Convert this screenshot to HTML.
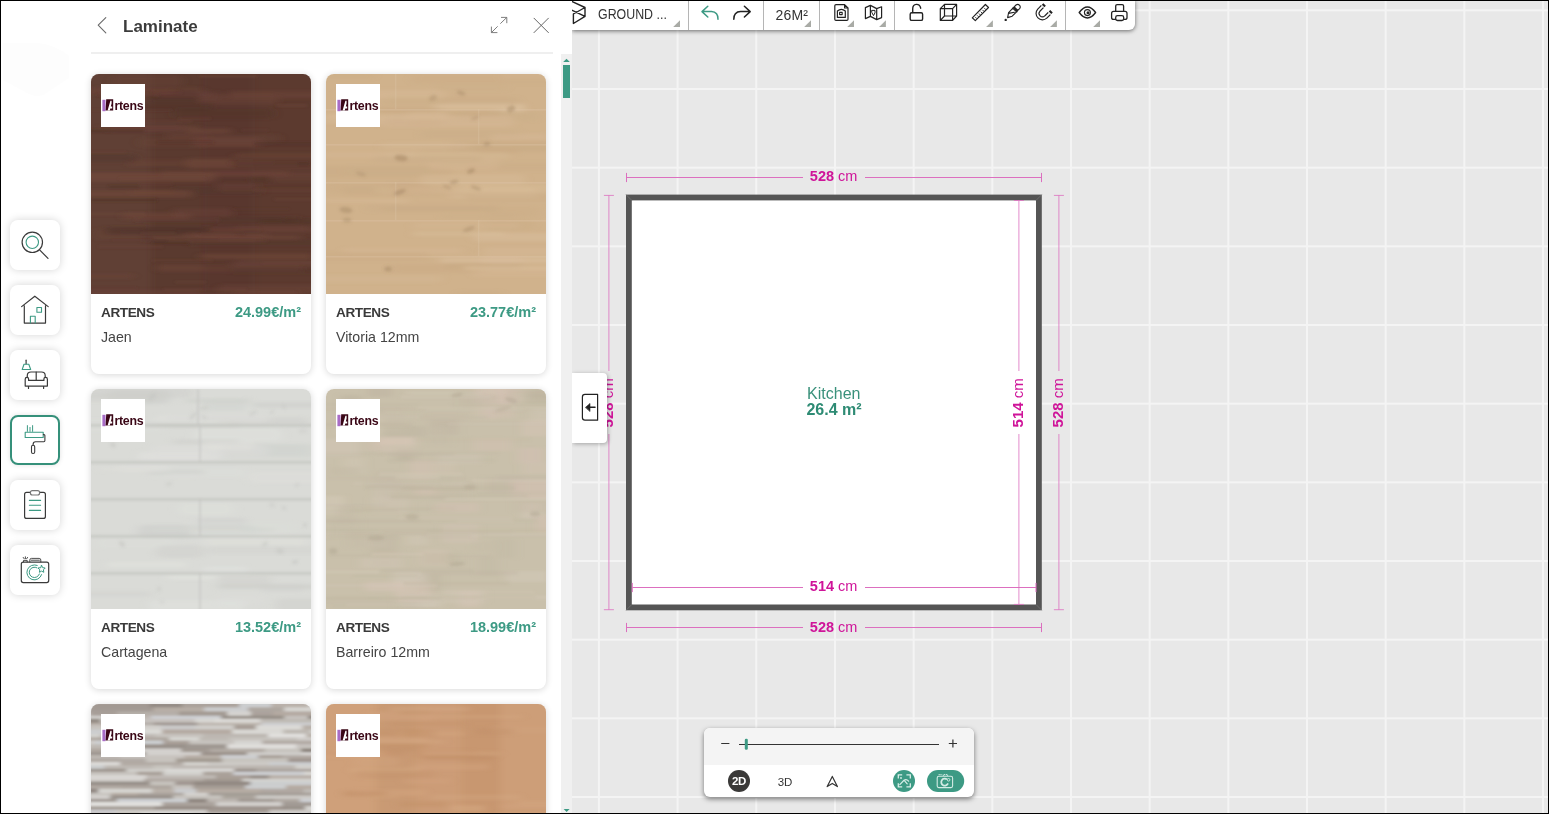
<!DOCTYPE html>
<html>
<head>
<meta charset="utf-8">
<title>Planner</title>
<style>
*{box-sizing:border-box;margin:0;padding:0}
html,body{width:1549px;height:814px;overflow:hidden;background:#fff;font-family:"Liberation Sans",sans-serif;}
#app{position:absolute;left:0;top:0;width:1549px;height:814px;overflow:hidden;background:#fff;will-change:transform}
#frame{position:absolute;left:0;top:0;width:1549px;height:814px;border:1px solid #000;z-index:100;pointer-events:none}
.abs{position:absolute}
/* ---------- canvas ---------- */
#canvas{position:absolute;left:572px;top:0;width:977px;height:814px;background:#e8e8e8;overflow:hidden}
#canvas svg{position:absolute;left:0;top:0}
/* ---------- left panel ---------- */
#panel{position:absolute;left:0;top:0;width:572px;height:814px;background:#fff;overflow:hidden}
#track{position:absolute;left:561px;top:54px;width:11px;height:760px;background:#f0f0f0}
#thumb{position:absolute;left:563px;top:65px;width:7px;height:33px;background:#3d9a84}
.sb{position:absolute;left:10px;width:50px;height:50px;border-radius:8px;background:#fff;box-shadow:0 0 8px rgba(0,0,0,.17)}
.sb.on{border:2px solid #35907a;box-shadow:0 0 5px rgba(0,0,0,.12)}
.sb svg{position:absolute;left:0;top:0}
.sb.on svg{left:-2px;top:-2px}
#title{position:absolute;left:123px;top:16.5px;font-weight:bold;font-size:17px;line-height:20px;color:#3c3c3c;white-space:nowrap}
#hline{position:absolute;left:91px;top:52px;width:462px;height:2px;background:#efefef}
.card{position:absolute;width:220px;height:300px;border-radius:8px;background:#fff;box-shadow:0 1px 7px rgba(0,0,0,.16);overflow:hidden}
.card .img{position:absolute;left:0;top:0;width:220px;height:220px;overflow:hidden}
.card .logo{position:absolute;left:10px;top:10px;width:44px;height:43px;background:#fff}
.card .brand{position:absolute;left:10px;top:231px;font-weight:bold;font-size:13.6px;line-height:16px;color:#3a3a3a;white-space:nowrap;letter-spacing:-.42px}
.card .price{position:absolute;right:10px;top:230px;font-weight:bold;font-size:14.5px;line-height:16px;color:#3d9a84;white-space:nowrap;letter-spacing:0}
.card .name{position:absolute;left:10px;top:254.8px;font-size:14.2px;line-height:16px;color:#444;white-space:nowrap}
/* ---------- toolbar ---------- */
#toolbar{position:absolute;left:572px;top:0;width:563px;height:30px;background:#fff;border-bottom-right-radius:6px;box-shadow:0 1px 4px rgba(0,0,0,.55)}
#toolbar svg{position:absolute;left:0;top:0}
#toolbar .t{position:absolute;font-size:14px;line-height:16px;color:#333;white-space:nowrap}
/* ---------- collapse btn ---------- */
#collapse{position:absolute;left:572px;top:373px;width:35px;height:70px;background:#fff;border-radius:0 4px 4px 0;box-shadow:1px 1px 4px rgba(0,0,0,.3)}
/* ---------- bottom control ---------- */
#ctrl{position:absolute;left:704px;top:728px;width:270px;height:69px;background:#fff;border-radius:6px;box-shadow:0 2px 5px rgba(0,0,0,.5);overflow:hidden}
#ctrl .top{position:absolute;left:0;top:0;width:270px;height:37px;background:#f4f4f4}
</style>
</head>
<body>
<div id="app">

<!-- CANVAS -->
<div id="canvas">
<svg width="977" height="814" viewBox="572 0 977 814" font-family="Liberation Sans, sans-serif">
<g fill="#f4f4f4"><rect x="519.28" y="0" width="2" height="814"/><rect x="597.95" y="0" width="2" height="814"/><rect x="676.62" y="0" width="2" height="814"/><rect x="755.29" y="0" width="2" height="814"/><rect x="833.96" y="0" width="2" height="814"/><rect x="912.63" y="0" width="2" height="814"/><rect x="991.30" y="0" width="2" height="814"/><rect x="1069.97" y="0" width="2" height="814"/><rect x="1148.64" y="0" width="2" height="814"/><rect x="1227.31" y="0" width="2" height="814"/><rect x="1305.98" y="0" width="2" height="814"/><rect x="1384.65" y="0" width="2" height="814"/><rect x="1463.32" y="0" width="2" height="814"/><rect x="1541.99" y="0" width="2" height="814"/><rect x="572" y="9.30" width="977" height="2"/><rect x="572" y="87.97" width="977" height="2"/><rect x="572" y="166.64" width="977" height="2"/><rect x="572" y="245.31" width="977" height="2"/><rect x="572" y="323.98" width="977" height="2"/><rect x="572" y="402.65" width="977" height="2"/><rect x="572" y="481.32" width="977" height="2"/><rect x="572" y="559.99" width="977" height="2"/><rect x="572" y="638.66" width="977" height="2"/><rect x="572" y="717.33" width="977" height="2"/><rect x="572" y="796.00" width="977" height="2"/></g>
<rect x="626" y="194.6" width="415.79999999999995" height="415.69999999999993" fill="#555"/>
<rect x="631.8" y="200.4" width="404.19999999999993" height="404.0999999999999" fill="#fff"/>
<path d="M626 194.6l5.8 5.8M1041.8 194.6l-5.8 5.8M626 610.3l5.8 -5.8M1041.8 610.3l-5.8 -5.8" stroke="#777" stroke-width=".7"/>
<path d="M626.5 177.5H803M865 177.5H1041.5M626.5 172.9V182.1M1041.5 172.9V182.1" stroke="#dc6fbf" stroke-width="1" fill="none"/><text x="833.6" y="181.2" text-anchor="middle" font-size="14.5" fill="#cf1499"><tspan font-weight="bold">528</tspan> cm</text>
<path d="M626.5 627.5H803M865 627.5H1041.5M626.5 622.9V632.1M1041.5 622.9V632.1" stroke="#dc6fbf" stroke-width="1" fill="none"/><text x="833.6" y="632.2" text-anchor="middle" font-size="14.5" fill="#cf1499"><tspan font-weight="bold">528</tspan> cm</text>
<path d="M632.3 587.5H803M865 587.5H1036M632.3 582.9V592.1M1036 582.9V592.1" stroke="#dc6fbf" stroke-width="1" fill="none"/><text x="833.6" y="591.2" text-anchor="middle" font-size="14.5" fill="#cf1499"><tspan font-weight="bold">514</tspan> cm</text>
<path d="M608.9 195.4V371M608.9 434V609.7M603.9 195.4H613.9M603.9 609.7H613.9" stroke="#dc6fbf" stroke-width="1" fill="none" opacity=".8"/><text transform="translate(613 402.8) rotate(-90)" text-anchor="middle" font-size="15" fill="#cf1499"><tspan font-weight="bold">528</tspan> cm</text>
<path d="M1058.9 195.4V371M1058.9 434V609.7M1053.9 195.4H1063.9M1053.9 609.7H1063.9" stroke="#dc6fbf" stroke-width="1" fill="none" opacity=".8"/><text transform="translate(1063.2 402.8) rotate(-90)" text-anchor="middle" font-size="15" fill="#cf1499"><tspan font-weight="bold">528</tspan> cm</text>
<path d="M1018.9 200.5V371M1018.9 434V604.4M1013.9 200.5H1023.9M1013.9 604.4H1023.9" stroke="#dc6fbf" stroke-width="1" fill="none" opacity=".8"/><text transform="translate(1023 402.8) rotate(-90)" text-anchor="middle" font-size="15" fill="#cf1499"><tspan font-weight="bold">514</tspan> cm</text>
<text x="833.8" y="398.8" text-anchor="middle" font-size="16" fill="#3a917b">Kitchen</text>
<text x="834" y="414.8" text-anchor="middle" font-size="16" font-weight="bold" fill="#2e8b74">26.4 m²</text>
</svg>
</div>

<!-- TOOLBAR -->
<div id="toolbar">
<svg width="563" height="30" viewBox="572 0 563 30" fill="none" stroke-linecap="round" stroke-linejoin="round">
<path d="M688.5 1V30" stroke="#b5b5b5" stroke-width="1"/>
<path d="M763.5 1V30" stroke="#b5b5b5" stroke-width="1"/>
<path d="M819.5 1V30" stroke="#b5b5b5" stroke-width="1"/>
<path d="M894.5 1V30" stroke="#b5b5b5" stroke-width="1"/>
<path d="M1065.5 1V30" stroke="#b5b5b5" stroke-width="1"/>
<path d="M673.2 27L680.0 20.2V27Z" fill="#a9aba6"/>
<path d="M804.2 27L811.0 20.2V27Z" fill="#a9aba6"/>
<path d="M847.2 27L854.0 20.2V27Z" fill="#a9aba6"/>
<path d="M879.1 27L885.9 20.2V27Z" fill="#a9aba6"/>
<path d="M986.1 27L992.9 20.2V27Z" fill="#a9aba6"/>
<path d="M1050.1 27L1056.8999999999999 20.2V27Z" fill="#a9aba6"/>
<path d="M1093.2 27L1100.0 20.2V27Z" fill="#a9aba6"/>
<path d="M571 1L585 7.5V16.4L573.4 23.5V14M585 7.5L573.4 14M571 9.8L585 16.4" stroke="#222" stroke-width="1.4"/>
<path d="M707.8 6.3L702 11.6L707.8 17M702.4 11.6H711.5C716 11.6 718.2 15 718 19.2" stroke="#3d9a84" stroke-width="1.5"/>
<path d="M744.4 6.3L750.2 11.6L744.4 17M749.8 11.6H740.6C736 11.6 733.6 15 733.8 19.2" stroke="#222" stroke-width="1.5"/>
<path d="M836 4.6H844.6L848 8V19.2Q848 20.4 846.8 20.4H836Q834.8 20.4 834.8 19.2V5.8Q834.8 4.6 836 4.6ZM844.6 4.6V8H848" stroke="#222" stroke-width="1.2"/>
<path d="M837.4 17.4V11Q841.3 7.6 845.3 11V17.4Z" stroke="#222" stroke-width="1.2"/><rect x="839.6" y="12.4" width="2.6" height="2.2" stroke="#222" stroke-width="1.1"/>
<path d="M865.4 7.6L870.4 5.4L876.7 8.6L881.6 6.8V17.6L876.7 19.6L870.4 16.4L865.4 18.6ZM870.4 5.4V16.4M876.7 8.6V19.6" stroke="#222" stroke-width="1.2"/>
<path d="M872 10.4H875V12.8L873.5 15.6L872 12.8Z" stroke="#222" stroke-width="1"/>
<rect x="910.2" y="12.8" width="12.4" height="7.6" rx="1.5" stroke="#222" stroke-width="1.4"/>
<path d="M912.7 12.6V9C912.7 3 919.6 3 920.7 8.2" stroke="#222" stroke-width="1.4"/>
<path d="M940.3 8.6H952.6V20.4H940.3ZM944.5 4.4H956.6V16H944.5ZM940.3 8.6L944.5 4.4M952.6 8.6L956.6 4.4M952.6 20.4L956.6 16M940.3 20.4L944.5 16" stroke="#222" stroke-width="1.2"/>
<path d="M972.3 17.8L985.4 4.5L988.5 7.5L975.3 20.6Z" stroke="#222" stroke-width="1.2"/>
<path d="M975.6 17.4l.9.9M977.4 15.6l.9.9M979.2 13.8l.9.9M981 12l.9.9M982.8 10.2l.9.9M984.6 8.4l.9.9" stroke="#222" stroke-width=".9"/>
<circle cx="1005.7" cy="19.9" r="1.2" fill="#222"/>
<path d="M1007.6 17.6L1008.6 12.6L1013.6 7.4L1017.4 11L1012.2 16.2Z M1008.6 13.4L1014.4 12.2 M1012.6 8.2L1016.8 12 M1014.2 6.8L1016 5Q1017.8 3.6 1019.4 5.2Q1021 6.8 1019.6 8.6L1017.8 10.4Z" stroke="#222" stroke-width="1.1"/>
<path d="M1042.4 6.6L1038.84 10.14A4.9 4.9 0 0 0 1045.76 17.06L1049.3 13.5" stroke="#222" stroke-width="4.2" stroke-linecap="butt"/>
<path d="M1042.8 6.2L1038.84 10.14A4.9 4.9 0 0 0 1045.76 17.06L1049.7 13.1" stroke="#fff" stroke-width="1.9" stroke-linecap="butt"/>
<path d="M1042.4 6.6l.05-.05M1049.3 13.5l.05-.05" stroke="#222" stroke-width="4.2" stroke-linecap="butt"/>
<path d="M1043.1 5.9L1044.6 4.4M1050 12.8L1051.5 11.3" stroke="#222" stroke-width="3.6" stroke-linecap="butt"/>
<path d="M1079.2 12.5Q1087.4 1.6 1095.6 12.5Q1087.4 23.4 1079.2 12.5Z" stroke="#222" stroke-width="1.4"/>
<circle cx="1087.4" cy="12.6" r="3" stroke="#222" stroke-width="1.1"/><circle cx="1088" cy="12.8" r="1.5" fill="#222"/>
<rect x="1111.6" y="11.4" width="15.4" height="8" rx="2" stroke="#222" stroke-width="1.3"/>
<path d="M1115.7 11.2V6Q1115.7 4.6 1117.1 4.6H1122.2Q1123.6 4.6 1123.6 6V11.2" stroke="#222" stroke-width="1.3"/>
<rect x="1115.7" y="15.6" width="8" height="4.9" rx="1.8" fill="#fff" stroke="#222" stroke-width="1.3"/>
</svg>
<div class="t" style="left:25.5px;top:6px;transform:scaleX(.885);transform-origin:0 0">GROUND ...</div>
<div class="t" style="left:203.5px;top:7px;letter-spacing:.2px">26M²</div>
</div>

<!-- COLLAPSE -->
<div id="collapse">
<svg width="35" height="70" viewBox="572 373 35 70" fill="none" stroke="#222" stroke-linecap="round" stroke-linejoin="round"><path d="M597.6 394.4H585Q582.4 394.4 582.4 397V417.6Q582.4 420.2 585 420.2H597.6Z" stroke-width="1.2"/><path d="M588 407.3H595" stroke-width="1.5"/><path d="M585.6 407.3L590 403.4V411.2Z" fill="#222" stroke-width=".6"/></svg>
</div>

<!-- BOTTOM CONTROL -->
<div id="ctrl">
<div class="top"></div>
<svg style="position:absolute;left:0;top:0" width="270" height="69" viewBox="704 728 270 69" fill="none" font-family="Liberation Sans, sans-serif">
<path d="M721.2 743.5H729.4M948.8 743.5H957M952.9 739.4V747.6" stroke="#333" stroke-width="1.2"/>
<path d="M739 744.5H939" stroke="#333" stroke-width="1"/>
<rect x="744.8" y="738.8" width="3" height="11" rx="1.3" fill="#3d9a84"/>
<circle cx="739" cy="781" r="11" fill="#3a3938"/>
<text x="739" y="785.4" text-anchor="middle" font-size="11.5" font-weight="bold" fill="#fff" letter-spacing="-.4">2D</text>
<text x="785" y="786" text-anchor="middle" font-size="11.5" fill="#333">3D</text>
<path d="M832.3 776.4L837.4 786.6L832.3 783.4L827.2 786.6Z" stroke="#333" stroke-width="1.2" stroke-linejoin="round"/>
<circle cx="904" cy="781" r="11" fill="#3d9a84"/>
<path d="M898.3 778.6V774.9H902.2M906.4 774.9H910.3V778.6M910.3 783.2V786.9H906.4M902.2 786.9H898.3V783.2" stroke="#d9eee8" stroke-width="1.3"/>
<path d="M899.8 784.6L904 780.3Q906.4 778.6 908.6 781.2M904.8 781.2L907.2 783.8" stroke="#d9eee8" stroke-width="1.2" stroke-linecap="round"/><circle cx="901" cy="778" r=".9" fill="#d9eee8"/>
<rect x="927" y="770" width="37.2" height="22" rx="11" fill="#3d9a84"/>
<rect x="937.2" y="776.3" width="15.4" height="11.3" rx="1.6" stroke="#d4ebe5" stroke-width="1.1"/>
<path d="M938.6 774.6H942.4M943.4 775.8V774.6H947.6V775.8" stroke="#d4ebe5" stroke-width="1" stroke-dasharray="1.2 .6"/>
<path d="M947 779.4A3.5 3.5 0 1 0 948 783.4" stroke="#d4ebe5" stroke-width="1.8"/><circle cx="948.6" cy="779.8" r="1.3" stroke="#d4ebe5" stroke-width=".9" fill="#3d9a84"/>
</svg>
</div>

<!-- LEFT PANEL -->
<div id="panel">
<svg width="0" height="0" style="position:absolute"><defs><filter id="b1" x="-5%" y="-5%" width="110%" height="110%"><feGaussianBlur stdDeviation="1.6 0.9"/></filter><filter id="b2" x="-5%" y="-5%" width="110%" height="110%"><feGaussianBlur stdDeviation="2.2 0.8"/></filter><filter id="b3" x="-5%" y="-5%" width="110%" height="110%"><feGaussianBlur stdDeviation="4 1.8"/></filter><filter id="b4" x="-5%" y="-5%" width="110%" height="110%"><feGaussianBlur stdDeviation="1.5"/></filter><filter id="b5" x="-5%" y="-5%" width="110%" height="110%"><feGaussianBlur stdDeviation="0.9"/></filter></defs></svg>
<div class="sb" style="top:220px"><svg width="50" height="50" viewBox="0 0 50 50" fill="none" stroke-linecap="round" stroke-linejoin="round"><circle cx="22.3" cy="22.3" r="10.2" stroke="#3a3a3a" stroke-width="1.2"/><circle cx="22.3" cy="22.3" r="6.2" stroke="#3d9a84" stroke-width="1.1"/><path d="M29.6 29.8L38 38.4" stroke="#3a3a3a" stroke-width="1.2"/></svg></div>
<div class="sb" style="top:285px"><svg width="50" height="50" viewBox="0 0 50 50" fill="none" stroke-linecap="round" stroke-linejoin="round"><path d="M11.6 21.6L24.8 11.2L38.2 21.6M14.3 20.8V38.1H35.5V20.8" stroke="#3a3a3a" stroke-width="1.2"/><rect x="26.9" y="22.5" width="4.6" height="4.7" stroke="#3d9a84" stroke-width="1.1"/><path d="M20.4 38V31.3H25.2V38" stroke="#3d9a84" stroke-width="1.1"/></svg></div>
<div class="sb" style="top:350px"><svg width="50" height="50" viewBox="0 0 50 50" fill="none" stroke-linecap="round" stroke-linejoin="round"><path d="M16.1 10.2V14" stroke="#3a3a3a" stroke-width="1.2"/><path d="M14 14.3H18.8L20.7 19.5H12.2Z" stroke="#3d9a84" stroke-width="1.1"/><path d="M17.3 27.4V25.6Q17.3 22 21 22H31.4Q35.2 22 35.2 25.6V27.4" stroke="#3a3a3a" stroke-width="1.2"/><path d="M18.6 30.4V29Q18.6 27.4 17 27.4Q15.2 27.4 15.2 29.2V36.1H37.4V29.2Q37.4 27.4 35.6 27.4Q33.9 27.4 33.9 29V30.4ZM26.2 22V30.4M18.5 36.1V38.4M33.6 36.1V38.4" stroke="#3a3a3a" stroke-width="1.2"/></svg></div>
<div class="sb on" style="top:415px"><svg width="50" height="50" viewBox="0 0 50 50" fill="none" stroke-linecap="round" stroke-linejoin="round"><rect x="15.2" y="17.3" width="18" height="5.2" stroke="#3d9a84" stroke-width="1.1"/><path d="M17.4 10.6V16.4M20 12.4V16.4M22.6 10.6V16.4" stroke="#3d9a84" stroke-width="1"/><path d="M33.4 19.6H34Q34.9 19.6 34.9 20.6V25.6Q34.9 26.8 33.8 26.8H25.6Q23.1 26.8 23.1 29.4V30.2" stroke="#3a3a3a" stroke-width="1.1"/><rect x="21.5" y="30.3" width="3.2" height="8.2" rx="1.5" stroke="#3a3a3a" stroke-width="1.1"/></svg></div>
<div class="sb" style="top:480px"><svg width="50" height="50" viewBox="0 0 50 50" fill="none" stroke-linecap="round" stroke-linejoin="round"><path d="M20.4 12.4H16.6Q14.6 12.4 14.6 14.4V36.4Q14.6 38.4 16.6 38.4H33.4Q35.4 38.4 35.4 36.4V14.4Q35.4 12.4 33.4 12.4H29.6" stroke="#3a3a3a" stroke-width="1.2"/><rect x="20.4" y="10.6" width="9.2" height="4.4" rx="2" stroke="#777" stroke-width="1.2"/><path d="M19.4 20.4H30.6M19.4 25.3H30.6M19.4 30.4H30.6" stroke="#3d9a84" stroke-width="1.1"/></svg></div>
<div class="sb" style="top:545px"><svg width="50" height="50" viewBox="0 0 50 50" fill="none" stroke-linecap="round" stroke-linejoin="round"><rect x="11.3" y="17.2" width="27.4" height="20.4" rx="2" stroke="#3a3a3a" stroke-width="1.2"/><path d="M19.8 17V15Q19.8 13.4 21.4 13.4H29.2Q30.8 13.4 30.8 15V17M21.2 15.2H29.4M13.5 17V15.4H17.2V17M13.2 12.4L14.2 13.8M15.4 11.8V13.6M17.6 12.4L16.6 13.8" stroke="#3a3a3a" stroke-width=".9"/><path d="M27.2 20.4A7.5 7.5 0 1 0 31.6 29.6" stroke="#3d9a84" stroke-width="1"/><path d="M27 22.8A5.2 5.2 0 1 0 29.4 29" stroke="#3d9a84" stroke-width="1"/><path d="M31.6 20.4L32.7 22.7L35.2 23L33.4 24.8L33.8 27.3L31.6 26.1L29.4 27.3L29.8 24.8L28 23L30.5 22.7Z" stroke="#3d9a84" stroke-width="1" fill="#fff"/></svg></div>
<svg class="abs" style="left:0;top:40px" width="75" height="60" viewBox="0 40 75 60"><path d="M3 43H38Q56 45 69 56V78L43 95Q35 98 27 93L3 80Z" fill="#fdfdfd"/></svg>
<svg class="abs" style="left:90px;top:10px" width="480" height="32" viewBox="90 10 480 32" fill="none" stroke="#6a6a6a" stroke-width="1.1" stroke-linecap="round" stroke-linejoin="round"><path d="M105.8 17.6L98.2 25.2L105.8 32.8"/><path d="M491.6 32.4L497.4 26.6M500.6 23.4L506.6 17.6M501.4 17.4H506.8V22.8M491.4 27V32.6H497" stroke="#777" stroke-width=".95"/><path d="M534 18.2L548.4 32.6M548.4 18.2L534 32.6" stroke="#666" stroke-width="1"/></svg>
<div id="title">Laminate</div>
<div id="hline"></div>
<div class="card" style="left:91px;top:74px"><div class="img"><svg width="220" height="220" viewBox="0 0 220 220"><rect width="220" height="220" fill="#5c3b30"/><g filter="url(#b3)"><rect x="-10" y="-10" width="70" height="240" fill="#66443a" opacity="0.45"/><rect x="60" y="-10" width="50" height="240" fill="#563830" opacity="0.3"/><rect x="110" y="-10" width="50" height="240" fill="#5e3d32" opacity="0.2"/><rect x="160" y="-10" width="70" height="240" fill="#5b3a30" opacity="0.3"/><rect x="112" y="-10" width="50" height="240" fill="#53352c" opacity="0.35"/></g><g filter="url(#b3)"><rect x="160" y="101.4" width="90" height="7.9" rx="4.0" fill="#52352b" opacity="0.56"/><rect x="81" y="134.3" width="61" height="9.6" rx="4.8" fill="#70463a" opacity="0.33"/><rect x="144" y="151.9" width="73" height="4.6" rx="2.3" fill="#6c4438" opacity="0.48"/><rect x="125" y="142.3" width="84" height="7.2" rx="3.6" fill="#52352b" opacity="0.30"/><rect x="9" y="51.7" width="98" height="4.4" rx="2.2" fill="#6c4438" opacity="0.53"/><rect x="17" y="49.9" width="76" height="8.1" rx="4.1" fill="#68423a" opacity="0.45"/><rect x="21" y="219.5" width="113" height="7.2" rx="3.6" fill="#6c4438" opacity="0.51"/><rect x="37" y="13.6" width="75" height="5.6" rx="2.8" fill="#6c4438" opacity="0.42"/><rect x="145" y="186.1" width="133" height="6.7" rx="3.4" fill="#6c4438" opacity="0.36"/><rect x="29" y="155.4" width="142" height="4.4" rx="2.2" fill="#4e3229" opacity="0.32"/><rect x="21" y="17.3" width="109" height="9.4" rx="4.7" fill="#68423a" opacity="0.30"/><rect x="2" y="155.0" width="85" height="10.5" rx="5.2" fill="#6c4438" opacity="0.32"/><rect x="70" y="97.3" width="128" height="5.2" rx="2.6" fill="#70463a" opacity="0.60"/><rect x="37" y="85.7" width="125" height="6.9" rx="3.5" fill="#70463a" opacity="0.30"/><rect x="74" y="219.5" width="135" height="10.8" rx="5.4" fill="#6c4438" opacity="0.36"/><rect x="105" y="20.3" width="83" height="10.0" rx="5.0" fill="#70463a" opacity="0.36"/><rect x="47" y="63.8" width="68" height="9.4" rx="4.7" fill="#6c4438" opacity="0.32"/><rect x="-16" y="79.8" width="63" height="8.5" rx="4.2" fill="#52352b" opacity="0.44"/><rect x="66" y="190.4" width="146" height="7.4" rx="3.7" fill="#70463a" opacity="0.49"/><rect x="103" y="159.0" width="74" height="5.6" rx="2.8" fill="#70463a" opacity="0.52"/><rect x="139" y="193.8" width="143" height="5.4" rx="2.7" fill="#52352b" opacity="0.32"/><rect x="95" y="54.6" width="45" height="4.8" rx="2.4" fill="#72493b" opacity="0.51"/><rect x="103" y="63.1" width="68" height="9.8" rx="4.9" fill="#70463a" opacity="0.58"/><rect x="47" y="143.1" width="147" height="4.9" rx="2.4" fill="#52352b" opacity="0.48"/><rect x="21" y="1.7" width="71" height="10.4" rx="5.2" fill="#68423a" opacity="0.42"/><rect x="38" y="115.9" width="67" height="4.3" rx="2.2" fill="#70463a" opacity="0.33"/><rect x="53" y="160.7" width="55" height="7.2" rx="3.6" fill="#52352b" opacity="0.48"/><rect x="-13" y="200.1" width="55" height="4.2" rx="2.1" fill="#72493b" opacity="0.39"/><rect x="3" y="12.9" width="44" height="8.2" rx="4.1" fill="#68423a" opacity="0.40"/><rect x="59" y="161.6" width="150" height="4.5" rx="2.3" fill="#72493b" opacity="0.52"/><rect x="55" y="16.9" width="54" height="10.7" rx="5.4" fill="#4e3229" opacity="0.57"/><rect x="112" y="189.7" width="136" height="6.9" rx="3.5" fill="#52352b" opacity="0.30"/><rect x="-31" y="14.0" width="113" height="6.7" rx="3.3" fill="#6c4438" opacity="0.49"/><rect x="94" y="84.2" width="149" height="10.2" rx="5.1" fill="#72493b" opacity="0.51"/><rect x="82" y="113.2" width="90" height="7.2" rx="3.6" fill="#52352b" opacity="0.31"/><rect x="14" y="153.0" width="106" height="7.4" rx="3.7" fill="#4e3229" opacity="0.53"/><rect x="143" y="79.7" width="113" height="7.4" rx="3.7" fill="#70463a" opacity="0.50"/><rect x="169" y="144.5" width="62" height="5.2" rx="2.6" fill="#4e3229" opacity="0.45"/><rect x="32" y="138.8" width="67" height="6.8" rx="3.4" fill="#70463a" opacity="0.56"/><rect x="40" y="28.2" width="82" height="8.1" rx="4.0" fill="#4e3229" opacity="0.41"/><rect x="-29" y="215.6" width="139" height="4.3" rx="2.1" fill="#70463a" opacity="0.33"/><rect x="140" y="82.9" width="92" height="10.5" rx="5.2" fill="#52352b" opacity="0.45"/><rect x="179" y="98.4" width="75" height="9.9" rx="4.9" fill="#6c4438" opacity="0.55"/><rect x="118" y="60.4" width="71" height="8.3" rx="4.1" fill="#68423a" opacity="0.39"/><rect x="-12" y="99.0" width="127" height="4.1" rx="2.1" fill="#6c4438" opacity="0.53"/><rect x="143" y="216.5" width="69" height="9.5" rx="4.7" fill="#6c4438" opacity="0.43"/><rect x="127" y="210.8" width="109" height="8.6" rx="4.3" fill="#72493b" opacity="0.36"/><rect x="99" y="165.6" width="131" height="5.8" rx="2.9" fill="#52352b" opacity="0.51"/><rect x="54" y="152.8" width="60" height="5.9" rx="3.0" fill="#52352b" opacity="0.45"/><rect x="116" y="153.4" width="150" height="5.1" rx="2.6" fill="#70463a" opacity="0.33"/><rect x="-18" y="98.7" width="143" height="9.1" rx="4.5" fill="#72493b" opacity="0.57"/><rect x="126" y="109.6" width="41" height="7.9" rx="3.9" fill="#68423a" opacity="0.44"/><rect x="109" y="179.7" width="112" height="5.4" rx="2.7" fill="#72493b" opacity="0.58"/><rect x="66" y="17.5" width="54" height="5.7" rx="2.8" fill="#68423a" opacity="0.46"/><rect x="139" y="188.0" width="127" height="6.2" rx="3.1" fill="#68423a" opacity="0.45"/><rect x="76" y="59.1" width="44" height="6.4" rx="3.2" fill="#6c4438" opacity="0.37"/><rect x="-34" y="116.4" width="135" height="7.0" rx="3.5" fill="#72493b" opacity="0.54"/><rect x="91" y="158.6" width="55" height="5.0" rx="2.5" fill="#72493b" opacity="0.51"/><rect x="138" y="17.1" width="144" height="7.4" rx="3.7" fill="#70463a" opacity="0.43"/><rect x="82" y="34.5" width="101" height="9.8" rx="4.9" fill="#52352b" opacity="0.55"/></g><g filter="url(#b1)"><rect x="61" y="185.6" width="61" height="2.1" rx="1.1" fill="#744a3d" opacity="0.28"/><rect x="48" y="108.5" width="34" height="2.6" rx="1.3" fill="#683f35" opacity="0.33"/><rect x="-12" y="213.2" width="58" height="2.7" rx="1.4" fill="#683f35" opacity="0.34"/><rect x="-8" y="35.0" width="89" height="1.7" rx="0.9" fill="#683f35" opacity="0.30"/><rect x="28" y="103.0" width="87" height="3.3" rx="1.7" fill="#744a3d" opacity="0.28"/><rect x="162" y="114.5" width="84" height="3.4" rx="1.7" fill="#70463a" opacity="0.25"/><rect x="7" y="171.0" width="65" height="3.4" rx="1.7" fill="#70463a" opacity="0.21"/><rect x="50" y="158.6" width="35" height="1.5" rx="0.8" fill="#744a3d" opacity="0.35"/><rect x="17" y="111.3" width="32" height="3.0" rx="1.5" fill="#4c3028" opacity="0.38"/><rect x="-16" y="138.5" width="71" height="3.3" rx="1.6" fill="#744a3d" opacity="0.33"/><rect x="20" y="46.0" width="81" height="2.6" rx="1.3" fill="#744a3d" opacity="0.26"/><rect x="163" y="68.1" width="73" height="3.1" rx="1.6" fill="#4c3028" opacity="0.42"/><rect x="30" y="19.5" width="38" height="3.1" rx="1.5" fill="#744a3d" opacity="0.23"/><rect x="84" y="206.9" width="31" height="2.3" rx="1.1" fill="#744a3d" opacity="0.25"/><rect x="0" y="124.5" width="66" height="3.1" rx="1.5" fill="#4c3028" opacity="0.43"/><rect x="76" y="166.3" width="88" height="1.7" rx="0.9" fill="#744a3d" opacity="0.40"/><rect x="142" y="134.2" width="56" height="1.5" rx="0.8" fill="#683f35" opacity="0.24"/><rect x="168" y="217.8" width="37" height="1.9" rx="1.0" fill="#70463a" opacity="0.34"/><rect x="6" y="19.5" width="34" height="2.9" rx="1.4" fill="#683f35" opacity="0.32"/><rect x="108" y="0.9" width="58" height="2.4" rx="1.2" fill="#70463a" opacity="0.41"/><rect x="146" y="88.0" width="37" height="2.4" rx="1.2" fill="#744a3d" opacity="0.35"/><rect x="60" y="16.8" width="31" height="3.1" rx="1.5" fill="#683f35" opacity="0.34"/><rect x="61" y="167.3" width="37" height="2.7" rx="1.3" fill="#4c3028" opacity="0.43"/><rect x="145" y="88.1" width="73" height="3.1" rx="1.5" fill="#4c3028" opacity="0.42"/><rect x="137" y="88.1" width="70" height="3.0" rx="1.5" fill="#744a3d" opacity="0.22"/><rect x="-12" y="77.0" width="47" height="2.4" rx="1.2" fill="#70463a" opacity="0.26"/><rect x="43" y="144.5" width="86" height="2.8" rx="1.4" fill="#744a3d" opacity="0.33"/><rect x="120" y="153.7" width="50" height="3.5" rx="1.7" fill="#683f35" opacity="0.45"/><rect x="151" y="55.0" width="26" height="2.7" rx="1.4" fill="#683f35" opacity="0.33"/><rect x="-20" y="55.4" width="74" height="2.8" rx="1.4" fill="#4c3028" opacity="0.43"/><rect x="183" y="124.1" width="61" height="2.5" rx="1.3" fill="#70463a" opacity="0.36"/><rect x="99" y="166.6" width="78" height="1.7" rx="0.8" fill="#70463a" opacity="0.30"/><rect x="171" y="188.0" width="86" height="2.3" rx="1.1" fill="#70463a" opacity="0.31"/><rect x="66" y="67.4" width="57" height="2.1" rx="1.0" fill="#4c3028" opacity="0.32"/><rect x="128" y="164.0" width="43" height="3.4" rx="1.7" fill="#70463a" opacity="0.20"/><rect x="21" y="165.5" width="41" height="1.6" rx="0.8" fill="#683f35" opacity="0.21"/><rect x="109" y="158.5" width="45" height="2.3" rx="1.1" fill="#4c3028" opacity="0.22"/><rect x="72" y="214.0" width="84" height="2.4" rx="1.2" fill="#744a3d" opacity="0.21"/><rect x="185" y="30.0" width="31" height="3.1" rx="1.6" fill="#744a3d" opacity="0.35"/><rect x="88" y="43.2" width="32" height="2.7" rx="1.4" fill="#70463a" opacity="0.29"/></g></svg></div><div class="logo"><svg width="44" height="43" viewBox="0 0 44 43" font-family="Liberation Sans, sans-serif"><rect x="1.4" y="15.8" width="3.1" height="11.4" fill="#a86cc6"/><path d="M5.2 15.2H12.2V26.4H4.6Z" fill="#3a0716"/><path d="M9.4 16.8L6.6 26.4H8.8L9.3 24.4H11.2V22.6H9.8L10.6 19.6V16.8Z" fill="#fff"/><text x="13.4" y="25.8" font-size="12.4" font-weight="bold" fill="#3a0716" letter-spacing="-.25">rtens</text></svg></div><div class="brand">ARTENS</div><div class="price">24.99€/m²</div><div class="name">Jaen</div></div>
<div class="card" style="left:326px;top:74px"><div class="img"><svg width="220" height="220" viewBox="0 0 220 220"><rect width="220" height="220" fill="#d0b28c"/><g filter="url(#b3)"><rect x="107" y="29.7" width="92" height="9.3" rx="4.6" fill="#dabf9e" opacity="0.60"/><rect x="65" y="189.9" width="93" height="9.1" rx="4.6" fill="#c9aa84" opacity="0.47"/><rect x="53" y="34.0" width="113" height="5.2" rx="2.6" fill="#c9aa84" opacity="0.32"/><rect x="94" y="72.8" width="130" height="4.6" rx="2.3" fill="#cbae89" opacity="0.54"/><rect x="157" y="145.0" width="50" height="11.4" rx="5.7" fill="#c9aa84" opacity="0.33"/><rect x="-23" y="92.0" width="149" height="11.6" rx="5.8" fill="#c9aa84" opacity="0.46"/><rect x="147" y="194.6" width="137" height="8.5" rx="4.2" fill="#d6b896" opacity="0.35"/><rect x="42" y="130.3" width="130" height="7.2" rx="3.6" fill="#cbae89" opacity="0.48"/><rect x="-13" y="40.6" width="100" height="9.1" rx="4.6" fill="#d8bc99" opacity="0.41"/><rect x="113" y="23.3" width="80" height="9.5" rx="4.8" fill="#c9aa84" opacity="0.40"/><rect x="132" y="37.8" width="81" height="8.6" rx="4.3" fill="#cbae89" opacity="0.55"/><rect x="19" y="92.8" width="87" height="8.2" rx="4.1" fill="#cbae89" opacity="0.36"/><rect x="12" y="15.3" width="107" height="10.0" rx="5.0" fill="#d8bc99" opacity="0.31"/><rect x="110" y="9.6" width="70" height="6.8" rx="3.4" fill="#cbae89" opacity="0.41"/><rect x="119" y="187.9" width="77" height="7.6" rx="3.8" fill="#c9aa84" opacity="0.59"/><rect x="58" y="40.0" width="58" height="11.4" rx="5.7" fill="#c9aa84" opacity="0.57"/><rect x="151" y="73.9" width="41" height="6.1" rx="3.1" fill="#c9aa84" opacity="0.54"/><rect x="-5" y="78.1" width="95" height="6.0" rx="3.0" fill="#d6b896" opacity="0.45"/><rect x="154" y="182.7" width="43" height="6.6" rx="3.3" fill="#dabf9e" opacity="0.37"/><rect x="96" y="56.3" width="98" height="7.8" rx="3.9" fill="#cbae89" opacity="0.57"/><rect x="165" y="59.8" width="58" height="6.3" rx="3.2" fill="#d6b896" opacity="0.49"/><rect x="122" y="113.7" width="89" height="10.3" rx="5.2" fill="#dabf9e" opacity="0.50"/><rect x="139" y="91.3" width="116" height="5.1" rx="2.5" fill="#c9aa84" opacity="0.36"/><rect x="87" y="157.6" width="92" height="4.5" rx="2.2" fill="#d8bc99" opacity="0.53"/><rect x="157" y="173.2" width="86" height="8.7" rx="4.4" fill="#d6b896" opacity="0.47"/><rect x="29" y="33.7" width="148" height="9.1" rx="4.6" fill="#c9aa84" opacity="0.57"/><rect x="139" y="116.8" width="128" height="11.2" rx="5.6" fill="#cbae89" opacity="0.54"/><rect x="18" y="174.0" width="118" height="5.5" rx="2.8" fill="#d6b896" opacity="0.45"/><rect x="87" y="148.8" width="107" height="5.7" rx="2.8" fill="#d6b896" opacity="0.37"/><rect x="114" y="29.5" width="85" height="6.6" rx="3.3" fill="#dabf9e" opacity="0.52"/><rect x="117" y="139.4" width="74" height="5.4" rx="2.7" fill="#cbae89" opacity="0.41"/><rect x="81" y="37.8" width="43" height="7.9" rx="4.0" fill="#d6b896" opacity="0.40"/><rect x="175" y="-0.3" width="66" height="6.6" rx="3.3" fill="#d8bc99" opacity="0.41"/><rect x="17" y="112.6" width="133" height="9.5" rx="4.8" fill="#c9aa84" opacity="0.45"/><rect x="56" y="132.6" width="117" height="5.3" rx="2.6" fill="#c9aa84" opacity="0.44"/><rect x="112" y="88.5" width="126" height="4.4" rx="2.2" fill="#cbae89" opacity="0.46"/><rect x="-5" y="124.6" width="88" height="4.4" rx="2.2" fill="#d8bc99" opacity="0.41"/><rect x="62" y="78.1" width="121" height="6.6" rx="3.3" fill="#d8bc99" opacity="0.35"/><rect x="-1" y="107.8" width="92" height="10.4" rx="5.2" fill="#cbae89" opacity="0.54"/><rect x="102" y="84.4" width="71" height="11.5" rx="5.7" fill="#d6b896" opacity="0.40"/><rect x="160" y="133.1" width="54" height="9.1" rx="4.6" fill="#cbae89" opacity="0.42"/><rect x="48" y="82.3" width="108" height="6.1" rx="3.1" fill="#cbae89" opacity="0.58"/><rect x="114" y="183.5" width="130" height="5.5" rx="2.7" fill="#dabf9e" opacity="0.59"/><rect x="138" y="191.9" width="98" height="4.4" rx="2.2" fill="#d8bc99" opacity="0.59"/><rect x="123" y="67.1" width="141" height="10.2" rx="5.1" fill="#c9aa84" opacity="0.52"/><rect x="-32" y="177.9" width="135" height="8.4" rx="4.2" fill="#c9aa84" opacity="0.35"/><rect x="2" y="38.9" width="119" height="6.4" rx="3.2" fill="#d8bc99" opacity="0.46"/><rect x="64" y="108.6" width="42" height="11.3" rx="5.6" fill="#c9aa84" opacity="0.43"/><rect x="131" y="110.2" width="98" height="9.2" rx="4.6" fill="#d8bc99" opacity="0.44"/><rect x="49" y="112.7" width="110" height="7.1" rx="3.6" fill="#d8bc99" opacity="0.31"/><rect x="59" y="20.9" width="57" height="10.1" rx="5.0" fill="#cbae89" opacity="0.46"/><rect x="-30" y="201.5" width="146" height="7.0" rx="3.5" fill="#d8bc99" opacity="0.32"/><rect x="-4" y="-0.1" width="52" height="4.7" rx="2.3" fill="#c9aa84" opacity="0.31"/><rect x="147" y="159.1" width="116" height="8.5" rx="4.3" fill="#dabf9e" opacity="0.48"/><rect x="94" y="100.3" width="105" height="10.4" rx="5.2" fill="#d8bc99" opacity="0.43"/><rect x="18" y="17.4" width="100" height="6.5" rx="3.3" fill="#d6b896" opacity="0.40"/><rect x="131" y="217.2" width="46" height="10.4" rx="5.2" fill="#c9aa84" opacity="0.39"/><rect x="86" y="0.8" width="142" height="8.8" rx="4.4" fill="#c9aa84" opacity="0.34"/><rect x="56" y="68.5" width="88" height="6.7" rx="3.4" fill="#d6b896" opacity="0.41"/><rect x="53" y="41.2" width="135" height="11.9" rx="6.0" fill="#d6b896" opacity="0.49"/></g><rect x="0" y="35" width="220" height="1.6" fill="#dfc8ab" opacity=".32"/><rect x="0" y="70" width="220" height="1.6" fill="#dfc8ab" opacity=".32"/><rect x="0" y="108" width="220" height="1.6" fill="#dfc8ab" opacity=".32"/><rect x="0" y="146" width="220" height="1.6" fill="#dfc8ab" opacity=".32"/><rect x="0" y="182" width="220" height="1.6" fill="#dfc8ab" opacity=".32"/><rect x="69" y="0" width="1.4" height="35" fill="#dfc8ab" opacity=".28"/><rect x="152" y="35" width="1.4" height="35" fill="#dfc8ab" opacity=".28"/><rect x="69" y="108" width="1.4" height="38" fill="#dfc8ab" opacity=".28"/><rect x="152" y="146" width="1.4" height="36" fill="#dfc8ab" opacity=".28"/><g filter="url(#b4)"><ellipse cx="135" cy="19" rx="4.4" ry="2.0" fill="#a88a68" opacity="0.47" transform="rotate(20 135 19)"/><ellipse cx="145" cy="97" rx="4.1" ry="2.1" fill="#a88a68" opacity="0.60" transform="rotate(-23 145 97)"/><ellipse cx="128" cy="108" rx="4.5" ry="1.8" fill="#a88a68" opacity="0.49" transform="rotate(-13 128 108)"/><ellipse cx="75" cy="84" rx="6.6" ry="3.1" fill="#a88a68" opacity="0.58" transform="rotate(6 75 84)"/><ellipse cx="20" cy="136" rx="6.6" ry="3.1" fill="#a88a68" opacity="0.49" transform="rotate(7 20 136)"/><ellipse cx="185" cy="35" rx="4.3" ry="3.2" fill="#a88a68" opacity="0.49" transform="rotate(-27 185 35)"/><ellipse cx="74" cy="118" rx="6.3" ry="2.4" fill="#a88a68" opacity="0.56" transform="rotate(-20 74 118)"/><ellipse cx="107" cy="24" rx="4.2" ry="2.8" fill="#a88a68" opacity="0.37" transform="rotate(-26 107 24)"/><ellipse cx="149" cy="44" rx="4.1" ry="1.7" fill="#a88a68" opacity="0.36" transform="rotate(-19 149 44)"/><ellipse cx="161" cy="70" rx="3.5" ry="2.3" fill="#a88a68" opacity="0.43" transform="rotate(-7 161 70)"/><ellipse cx="62" cy="195" rx="3.8" ry="2.5" fill="#a88a68" opacity="0.54" transform="rotate(-1 62 195)"/><ellipse cx="143" cy="155" rx="6.4" ry="2.1" fill="#a88a68" opacity="0.42" transform="rotate(-22 143 155)"/><ellipse cx="21" cy="146" rx="4.2" ry="2.6" fill="#a88a68" opacity="0.39" transform="rotate(-1 21 146)"/><ellipse cx="150" cy="114" rx="5.3" ry="1.8" fill="#a88a68" opacity="0.43" transform="rotate(20 150 114)"/><ellipse cx="35" cy="100" rx="5.1" ry="1.9" fill="#a88a68" opacity="0.36" transform="rotate(17 35 100)"/><ellipse cx="121" cy="113" rx="4.2" ry="1.7" fill="#a88a68" opacity="0.36" transform="rotate(20 121 113)"/></g></svg></div><div class="logo"><svg width="44" height="43" viewBox="0 0 44 43" font-family="Liberation Sans, sans-serif"><rect x="1.4" y="15.8" width="3.1" height="11.4" fill="#a86cc6"/><path d="M5.2 15.2H12.2V26.4H4.6Z" fill="#3a0716"/><path d="M9.4 16.8L6.6 26.4H8.8L9.3 24.4H11.2V22.6H9.8L10.6 19.6V16.8Z" fill="#fff"/><text x="13.4" y="25.8" font-size="12.4" font-weight="bold" fill="#3a0716" letter-spacing="-.25">rtens</text></svg></div><div class="brand">ARTENS</div><div class="price">23.77€/m²</div><div class="name">Vitoria 12mm</div></div>
<div class="card" style="left:91px;top:389px"><div class="img"><svg width="220" height="220" viewBox="0 0 220 220"><rect width="220" height="220" fill="#dadbd7"/><g filter="url(#b3)"><rect x="127" y="186.6" width="53" height="10.9" rx="5.4" fill="#cfd0cc" opacity="0.50"/><rect x="102" y="39.6" width="90" height="12.7" rx="6.3" fill="#e1e2de" opacity="0.46"/><rect x="76" y="184.0" width="49" height="6.9" rx="3.5" fill="#e1e2de" opacity="0.60"/><rect x="126" y="195.2" width="105" height="4.8" rx="2.4" fill="#cccdc9" opacity="0.55"/><rect x="130" y="55.0" width="97" height="13.5" rx="6.7" fill="#cfd0cc" opacity="0.45"/><rect x="57" y="78.9" width="98" height="9.6" rx="4.8" fill="#dddeda" opacity="0.49"/><rect x="94" y="138.7" width="89" height="7.5" rx="3.7" fill="#cccdc9" opacity="0.51"/><rect x="4" y="148.3" width="80" height="11.5" rx="5.7" fill="#dddeda" opacity="0.46"/><rect x="57" y="80.4" width="56" height="5.8" rx="2.9" fill="#cccdc9" opacity="0.48"/><rect x="82" y="50.3" width="66" height="5.3" rx="2.7" fill="#cfd0cc" opacity="0.57"/><rect x="59" y="137.7" width="93" height="5.3" rx="2.7" fill="#dddeda" opacity="0.42"/><rect x="-20" y="29.5" width="95" height="13.3" rx="6.7" fill="#dddeda" opacity="0.49"/><rect x="170" y="194.7" width="44" height="8.1" rx="4.1" fill="#cccdc9" opacity="0.36"/><rect x="110" y="28.4" width="107" height="7.7" rx="3.9" fill="#cfd0cc" opacity="0.52"/><rect x="107" y="129.3" width="49" height="10.2" rx="5.1" fill="#cccdc9" opacity="0.47"/><rect x="15" y="172.8" width="81" height="5.8" rx="2.9" fill="#e1e2de" opacity="0.57"/><rect x="112" y="177.2" width="45" height="8.3" rx="4.1" fill="#e1e2de" opacity="0.59"/><rect x="74" y="26.1" width="104" height="10.5" rx="5.2" fill="#cccdc9" opacity="0.34"/><rect x="107" y="15.2" width="57" height="6.7" rx="3.3" fill="#dddeda" opacity="0.46"/><rect x="32" y="32.4" width="107" height="4.4" rx="2.2" fill="#dddeda" opacity="0.37"/><rect x="65" y="156.6" width="49" height="12.0" rx="6.0" fill="#cfd0cc" opacity="0.52"/><rect x="162" y="55.4" width="53" height="10.8" rx="5.4" fill="#cfd0cc" opacity="0.41"/><rect x="27" y="75.9" width="52" height="6.9" rx="3.4" fill="#e1e2de" opacity="0.40"/><rect x="-12" y="202.5" width="71" height="4.7" rx="2.3" fill="#cccdc9" opacity="0.36"/><rect x="46" y="62.3" width="73" height="9.5" rx="4.8" fill="#dddeda" opacity="0.59"/><rect x="65" y="32.7" width="43" height="4.5" rx="2.3" fill="#cccdc9" opacity="0.39"/><rect x="7" y="78.1" width="65" height="4.3" rx="2.2" fill="#dddeda" opacity="0.48"/><rect x="47" y="63.6" width="82" height="8.3" rx="4.2" fill="#e1e2de" opacity="0.40"/><rect x="-8" y="-0.9" width="110" height="9.5" rx="4.7" fill="#cfd0cc" opacity="0.57"/><rect x="161" y="13.6" width="91" height="4.9" rx="2.4" fill="#cccdc9" opacity="0.54"/><rect x="125" y="205.6" width="49" height="11.2" rx="5.6" fill="#dddeda" opacity="0.36"/><rect x="94" y="9.5" width="65" height="4.5" rx="2.3" fill="#cfd0cc" opacity="0.58"/><rect x="50" y="31.1" width="98" height="7.7" rx="3.9" fill="#cccdc9" opacity="0.38"/><rect x="16" y="1.5" width="64" height="13.3" rx="6.7" fill="#cccdc9" opacity="0.56"/><rect x="47" y="136.1" width="120" height="12.1" rx="6.0" fill="#cccdc9" opacity="0.58"/><rect x="76" y="84.1" width="34" height="4.9" rx="2.5" fill="#dddeda" opacity="0.38"/><rect x="-29" y="4.5" width="101" height="8.5" rx="4.3" fill="#cccdc9" opacity="0.38"/><rect x="185" y="209.4" width="50" height="13.9" rx="7.0" fill="#cccdc9" opacity="0.42"/><rect x="59" y="56.0" width="119" height="11.6" rx="5.8" fill="#dddeda" opacity="0.47"/><rect x="116" y="156.5" width="116" height="8.6" rx="4.3" fill="#cfd0cc" opacity="0.31"/><rect x="66" y="25.8" width="112" height="8.8" rx="4.4" fill="#e1e2de" opacity="0.48"/><rect x="86" y="113.7" width="58" height="12.9" rx="6.4" fill="#e1e2de" opacity="0.36"/><rect x="57" y="211.0" width="97" height="10.5" rx="5.2" fill="#e1e2de" opacity="0.53"/><rect x="98" y="142.4" width="91" height="7.0" rx="3.5" fill="#dddeda" opacity="0.58"/><rect x="111" y="52.1" width="53" height="8.9" rx="4.4" fill="#e1e2de" opacity="0.47"/><rect x="96" y="133.0" width="110" height="13.1" rx="6.5" fill="#dddeda" opacity="0.37"/><rect x="53" y="30.9" width="76" height="4.1" rx="2.1" fill="#dddeda" opacity="0.55"/><rect x="112" y="146.1" width="105" height="10.8" rx="5.4" fill="#e1e2de" opacity="0.38"/><rect x="114" y="10.5" width="42" height="11.3" rx="5.6" fill="#cfd0cc" opacity="0.48"/><rect x="157" y="82.6" width="76" height="11.8" rx="5.9" fill="#dddeda" opacity="0.54"/></g><g filter="url(#b5)"><rect x="-4" y="34.8" width="228" height="3" fill="#c2c3bf" opacity=".62"/><rect x="-4" y="71.8" width="228" height="3" fill="#c2c3bf" opacity=".62"/><rect x="-4" y="108.8" width="228" height="3" fill="#c2c3bf" opacity=".62"/><rect x="-4" y="145.8" width="228" height="3" fill="#c2c3bf" opacity=".62"/><rect x="-4" y="182.8" width="228" height="3" fill="#c2c3bf" opacity=".62"/><rect x="108" y="36" width="2" height="37" fill="#c4c5c1" opacity=".55"/><rect x="108" y="110" width="2" height="37" fill="#c4c5c1" opacity=".55"/><rect x="108" y="184" width="2" height="40" fill="#c4c5c1" opacity=".55"/><rect x="106" y="0" width="2" height="36" fill="#c4c5c1" opacity=".55"/></g><g filter="url(#b4)"><ellipse cx="113" cy="19" rx="4.6" ry="2.1" fill="#c4c5c1" opacity="0.38" transform="rotate(-14 113 19)"/><ellipse cx="31" cy="48" rx="3.0" ry="2.2" fill="#c4c5c1" opacity="0.53" transform="rotate(52 31 48)"/><ellipse cx="68" cy="200" rx="2.1" ry="2.5" fill="#c4c5c1" opacity="0.42" transform="rotate(-2 68 200)"/><ellipse cx="193" cy="18" rx="2.8" ry="1.2" fill="#c4c5c1" opacity="0.46" transform="rotate(59 193 18)"/><ellipse cx="181" cy="116" rx="3.3" ry="2.2" fill="#c4c5c1" opacity="0.30" transform="rotate(15 181 116)"/><ellipse cx="189" cy="162" rx="4.0" ry="2.9" fill="#c4c5c1" opacity="0.47" transform="rotate(15 189 162)"/><ellipse cx="71" cy="213" rx="2.5" ry="1.5" fill="#c4c5c1" opacity="0.32" transform="rotate(-8 71 213)"/><ellipse cx="212" cy="42" rx="4.3" ry="1.9" fill="#c4c5c1" opacity="0.32" transform="rotate(-2 212 42)"/><ellipse cx="113" cy="28" rx="3.0" ry="1.3" fill="#c4c5c1" opacity="0.55" transform="rotate(33 113 28)"/><ellipse cx="162" cy="24" rx="4.3" ry="1.7" fill="#c4c5c1" opacity="0.39" transform="rotate(-29 162 24)"/><ellipse cx="174" cy="155" rx="3.3" ry="1.7" fill="#c4c5c1" opacity="0.52" transform="rotate(-35 174 155)"/><ellipse cx="181" cy="23" rx="2.1" ry="1.4" fill="#c4c5c1" opacity="0.53" transform="rotate(-42 181 23)"/><ellipse cx="214" cy="136" rx="2.3" ry="2.1" fill="#c4c5c1" opacity="0.48" transform="rotate(-54 214 136)"/><ellipse cx="193" cy="119" rx="2.4" ry="2.1" fill="#c4c5c1" opacity="0.44" transform="rotate(41 193 119)"/><ellipse cx="31" cy="155" rx="3.5" ry="2.5" fill="#c4c5c1" opacity="0.53" transform="rotate(43 31 155)"/><ellipse cx="61" cy="8" rx="4.8" ry="2.5" fill="#c4c5c1" opacity="0.49" transform="rotate(-43 61 8)"/><ellipse cx="78" cy="95" rx="3.3" ry="1.8" fill="#c4c5c1" opacity="0.40" transform="rotate(-18 78 95)"/><ellipse cx="46" cy="36" rx="2.5" ry="1.5" fill="#c4c5c1" opacity="0.43" transform="rotate(-53 46 36)"/><ellipse cx="206" cy="96" rx="2.4" ry="1.9" fill="#c4c5c1" opacity="0.36" transform="rotate(-41 206 96)"/><ellipse cx="204" cy="173" rx="3.2" ry="1.9" fill="#c4c5c1" opacity="0.57" transform="rotate(-12 204 173)"/><ellipse cx="22" cy="56" rx="2.5" ry="2.9" fill="#c4c5c1" opacity="0.53" transform="rotate(-54 22 56)"/><ellipse cx="102" cy="27" rx="4.6" ry="2.1" fill="#c4c5c1" opacity="0.44" transform="rotate(-43 102 27)"/></g></svg></div><div class="logo"><svg width="44" height="43" viewBox="0 0 44 43" font-family="Liberation Sans, sans-serif"><rect x="1.4" y="15.8" width="3.1" height="11.4" fill="#a86cc6"/><path d="M5.2 15.2H12.2V26.4H4.6Z" fill="#3a0716"/><path d="M9.4 16.8L6.6 26.4H8.8L9.3 24.4H11.2V22.6H9.8L10.6 19.6V16.8Z" fill="#fff"/><text x="13.4" y="25.8" font-size="12.4" font-weight="bold" fill="#3a0716" letter-spacing="-.25">rtens</text></svg></div><div class="brand">ARTENS</div><div class="price">13.52€/m²</div><div class="name">Cartagena</div></div>
<div class="card" style="left:326px;top:389px"><div class="img"><svg width="220" height="220" viewBox="0 0 220 220"><rect width="220" height="220" fill="#c9c0ab"/><g filter="url(#b3)"><rect x="133" y="202" width="21" height="16" fill="#d6c5b6" opacity="0.56"/><rect x="89" y="98" width="26" height="9" fill="#d3c0b2" opacity="0.44"/><rect x="39" y="193" width="39" height="9" fill="#d6c5b6" opacity="0.58"/><rect x="104" y="30" width="28" height="16" fill="#beb4a0" opacity="0.53"/><rect x="17" y="69" width="22" height="16" fill="#d2c7b6" opacity="0.40"/><rect x="118" y="201" width="41" height="13" fill="#d5cabb" opacity="0.33"/><rect x="117" y="135" width="35" height="19" fill="#d6c5b6" opacity="0.36"/><rect x="103" y="38" width="21" height="18" fill="#c6bca8" opacity="0.52"/><rect x="46" y="22" width="31" height="11" fill="#d2c7b6" opacity="0.40"/><rect x="81" y="146" width="21" height="10" fill="#d5cabb" opacity="0.33"/><rect x="108" y="95" width="31" height="16" fill="#c6bca8" opacity="0.46"/><rect x="46" y="82" width="29" height="18" fill="#c6bca8" opacity="0.60"/><rect x="22" y="150" width="43" height="9" fill="#d5cabb" opacity="0.45"/><rect x="207" y="-0" width="40" height="13" fill="#beb4a0" opacity="0.50"/><rect x="57" y="37" width="43" height="11" fill="#beb4a0" opacity="0.50"/><rect x="12" y="37" width="40" height="9" fill="#d2c7b6" opacity="0.64"/><rect x="196" y="74" width="34" height="11" fill="#d6c5b6" opacity="0.34"/><rect x="-10" y="50" width="44" height="17" fill="#d5cabb" opacity="0.39"/><rect x="192" y="59" width="25" height="15" fill="#d3c0b2" opacity="0.61"/><rect x="153" y="168" width="19" height="19" fill="#c3b9a5" opacity="0.48"/><rect x="75" y="206" width="41" height="12" fill="#d5cabb" opacity="0.49"/><rect x="200" y="2" width="43" height="14" fill="#beb4a0" opacity="0.63"/><rect x="48" y="18" width="31" height="12" fill="#c3b9a5" opacity="0.32"/><rect x="97" y="23" width="43" height="11" fill="#c6bca8" opacity="0.32"/><rect x="109" y="87" width="21" height="16" fill="#c6bca8" opacity="0.38"/><rect x="22" y="142" width="22" height="17" fill="#c3b9a5" opacity="0.64"/><rect x="209" y="126" width="41" height="18" fill="#d3c0b2" opacity="0.50"/><rect x="49" y="98" width="19" height="13" fill="#d2c7b6" opacity="0.60"/><rect x="196" y="114" width="20" height="16" fill="#d2c7b6" opacity="0.62"/><rect x="15" y="6" width="20" height="18" fill="#beb4a0" opacity="0.63"/><rect x="57" y="25" width="20" height="18" fill="#c6bca8" opacity="0.61"/><rect x="93" y="185" width="22" height="19" fill="#beb4a0" opacity="0.48"/><rect x="45" y="145" width="26" height="20" fill="#beb4a0" opacity="0.48"/><rect x="149" y="-3" width="33" height="18" fill="#d6c5b6" opacity="0.62"/><rect x="88" y="71" width="41" height="13" fill="#d6c5b6" opacity="0.31"/><rect x="167" y="150" width="22" height="19" fill="#c3b9a5" opacity="0.48"/><rect x="188" y="10" width="41" height="13" fill="#c6bca8" opacity="0.42"/><rect x="45" y="163" width="28" height="15" fill="#c6bca8" opacity="0.64"/><rect x="147" y="49" width="39" height="13" fill="#d3c0b2" opacity="0.48"/><rect x="42" y="51" width="21" height="11" fill="#d3c0b2" opacity="0.33"/><rect x="136" y="6" width="39" height="13" fill="#c3b9a5" opacity="0.54"/><rect x="160" y="88" width="37" height="16" fill="#c3b9a5" opacity="0.61"/><rect x="148" y="153" width="20" height="9" fill="#c6bca8" opacity="0.54"/><rect x="94" y="161" width="28" height="15" fill="#d6c5b6" opacity="0.42"/><rect x="1" y="129" width="32" height="20" fill="#c6bca8" opacity="0.35"/><rect x="189" y="112" width="41" height="11" fill="#c3b9a5" opacity="0.32"/><rect x="70" y="60" width="19" height="12" fill="#beb4a0" opacity="0.64"/><rect x="-5" y="107" width="23" height="18" fill="#d2c7b6" opacity="0.65"/><rect x="180" y="182" width="42" height="11" fill="#d5cabb" opacity="0.47"/><rect x="67" y="183" width="34" height="12" fill="#d5cabb" opacity="0.52"/><rect x="205" y="19" width="27" height="14" fill="#d2c7b6" opacity="0.41"/><rect x="34" y="169" width="42" height="10" fill="#d2c7b6" opacity="0.48"/><rect x="52" y="92" width="38" height="19" fill="#c6bca8" opacity="0.57"/><rect x="158" y="12" width="30" height="17" fill="#d3c0b2" opacity="0.49"/><rect x="110" y="114" width="43" height="9" fill="#d3c0b2" opacity="0.51"/><rect x="70" y="212" width="23" height="9" fill="#c6bca8" opacity="0.59"/><rect x="10" y="117" width="20" height="17" fill="#c3b9a5" opacity="0.38"/><rect x="112" y="65" width="44" height="10" fill="#d5cabb" opacity="0.32"/><rect x="69" y="193" width="36" height="20" fill="#d6c5b6" opacity="0.60"/><rect x="148" y="17" width="22" height="14" fill="#d6c5b6" opacity="0.31"/><rect x="4" y="78" width="30" height="8" fill="#c3b9a5" opacity="0.49"/><rect x="196" y="31" width="28" height="16" fill="#d6c5b6" opacity="0.45"/><rect x="83" y="70" width="23" height="20" fill="#d3c0b2" opacity="0.37"/><rect x="186" y="91" width="42" height="19" fill="#d3c0b2" opacity="0.63"/><rect x="56" y="49" width="33" height="16" fill="#d6c5b6" opacity="0.38"/><rect x="46" y="108" width="37" height="16" fill="#d2c7b6" opacity="0.37"/><rect x="42" y="-3" width="24" height="11" fill="#beb4a0" opacity="0.54"/><rect x="51" y="48" width="39" height="8" fill="#d6c5b6" opacity="0.64"/><rect x="170" y="-4" width="24" height="18" fill="#d3c0b2" opacity="0.59"/><rect x="97" y="164" width="35" height="11" fill="#beb4a0" opacity="0.32"/></g><g filter="url(#b1)"><rect x="100" y="140.3" width="129" height="2.4" rx="1.2" fill="#bfb5a0" opacity="0.33"/><rect x="-15" y="139.9" width="131" height="2.1" rx="1.1" fill="#bfb5a0" opacity="0.32"/><rect x="36" y="118.1" width="93" height="3.5" rx="1.7" fill="#c2b8a4" opacity="0.22"/><rect x="-19" y="33.8" width="106" height="3.5" rx="1.7" fill="#bfb5a0" opacity="0.31"/><rect x="53" y="83.4" width="84" height="3.4" rx="1.7" fill="#d3c9b8" opacity="0.34"/><rect x="-19" y="131.7" width="125" height="1.7" rx="0.8" fill="#bfb5a0" opacity="0.39"/><rect x="153" y="207.9" width="114" height="2.5" rx="1.2" fill="#d3c9b8" opacity="0.38"/><rect x="149" y="103.1" width="85" height="2.2" rx="1.1" fill="#c2b8a4" opacity="0.27"/><rect x="6" y="216.5" width="68" height="1.9" rx="0.9" fill="#bfb5a0" opacity="0.32"/><rect x="153" y="145.3" width="113" height="3.2" rx="1.6" fill="#bfb5a0" opacity="0.32"/><rect x="123" y="166.5" width="42" height="1.8" rx="0.9" fill="#bfb5a0" opacity="0.35"/><rect x="-30" y="63.9" width="127" height="1.9" rx="0.9" fill="#bfb5a0" opacity="0.28"/><rect x="181" y="2.1" width="46" height="3.4" rx="1.7" fill="#c2b8a4" opacity="0.22"/><rect x="1" y="88.7" width="140" height="1.5" rx="0.8" fill="#bfb5a0" opacity="0.28"/><rect x="95" y="182.5" width="97" height="3.1" rx="1.6" fill="#bfb5a0" opacity="0.36"/><rect x="-16" y="211.9" width="88" height="3.3" rx="1.7" fill="#c2b8a4" opacity="0.31"/><rect x="97" y="20.8" width="102" height="1.5" rx="0.8" fill="#d3c9b8" opacity="0.20"/><rect x="66" y="144.4" width="94" height="1.9" rx="0.9" fill="#bfb5a0" opacity="0.26"/><rect x="146" y="90.1" width="136" height="3.1" rx="1.6" fill="#d3c9b8" opacity="0.37"/><rect x="118" y="108.7" width="119" height="2.5" rx="1.3" fill="#d3c9b8" opacity="0.45"/><rect x="65" y="107.9" width="56" height="1.7" rx="0.8" fill="#bfb5a0" opacity="0.40"/><rect x="158" y="206.2" width="93" height="2.1" rx="1.1" fill="#d3c9b8" opacity="0.39"/><rect x="-14" y="116.1" width="74" height="1.6" rx="0.8" fill="#bfb5a0" opacity="0.21"/><rect x="3" y="165.6" width="42" height="1.6" rx="0.8" fill="#bfb5a0" opacity="0.39"/><rect x="46" y="27.0" width="100" height="2.3" rx="1.1" fill="#d3c9b8" opacity="0.25"/><rect x="172" y="86.7" width="53" height="3.5" rx="1.7" fill="#bfb5a0" opacity="0.28"/><rect x="84" y="130.0" width="127" height="2.9" rx="1.5" fill="#c2b8a4" opacity="0.33"/><rect x="39" y="97.0" width="67" height="2.8" rx="1.4" fill="#bfb5a0" opacity="0.43"/><rect x="-17" y="195.1" width="128" height="2.8" rx="1.4" fill="#d3c9b8" opacity="0.30"/><rect x="46" y="164.0" width="52" height="2.2" rx="1.1" fill="#d3c9b8" opacity="0.42"/><rect x="83" y="99.5" width="62" height="1.7" rx="0.9" fill="#bfb5a0" opacity="0.27"/><rect x="93" y="27.3" width="69" height="2.1" rx="1.0" fill="#c2b8a4" opacity="0.44"/><rect x="91" y="17.6" width="132" height="2.1" rx="1.1" fill="#d3c9b8" opacity="0.32"/><rect x="93" y="202.5" width="116" height="1.5" rx="0.8" fill="#d3c9b8" opacity="0.42"/><rect x="-17" y="130.4" width="112" height="1.8" rx="0.9" fill="#c2b8a4" opacity="0.42"/><rect x="77" y="206.7" width="133" height="3.0" rx="1.5" fill="#c2b8a4" opacity="0.37"/><rect x="55" y="180.4" width="93" height="2.1" rx="1.0" fill="#bfb5a0" opacity="0.43"/><rect x="20" y="214.8" width="90" height="2.1" rx="1.1" fill="#d3c9b8" opacity="0.31"/><rect x="100" y="144.5" width="133" height="3.0" rx="1.5" fill="#d3c9b8" opacity="0.41"/><rect x="27" y="93.4" width="116" height="2.7" rx="1.4" fill="#d3c9b8" opacity="0.27"/><rect x="62" y="63.6" width="66" height="3.2" rx="1.6" fill="#bfb5a0" opacity="0.31"/><rect x="76" y="97.5" width="113" height="3.5" rx="1.7" fill="#bfb5a0" opacity="0.43"/><rect x="14" y="22.1" width="44" height="2.5" rx="1.2" fill="#bfb5a0" opacity="0.21"/><rect x="-1" y="207.7" width="117" height="3.4" rx="1.7" fill="#bfb5a0" opacity="0.35"/><rect x="64" y="105.6" width="138" height="3.1" rx="1.6" fill="#bfb5a0" opacity="0.34"/><rect x="61" y="70.4" width="109" height="1.9" rx="1.0" fill="#bfb5a0" opacity="0.34"/><rect x="-10" y="19.4" width="110" height="2.4" rx="1.2" fill="#bfb5a0" opacity="0.24"/><rect x="121" y="34.0" width="100" height="2.1" rx="1.1" fill="#d3c9b8" opacity="0.27"/><rect x="26" y="185.6" width="66" height="2.5" rx="1.3" fill="#bfb5a0" opacity="0.26"/><rect x="74" y="6.4" width="92" height="2.8" rx="1.4" fill="#d3c9b8" opacity="0.30"/><rect x="-25" y="120.9" width="97" height="1.6" rx="0.8" fill="#bfb5a0" opacity="0.37"/><rect x="56" y="141.6" width="131" height="3.1" rx="1.6" fill="#c2b8a4" opacity="0.25"/><rect x="97" y="145.7" width="48" height="2.3" rx="1.2" fill="#bfb5a0" opacity="0.28"/><rect x="36" y="93.9" width="80" height="2.7" rx="1.3" fill="#bfb5a0" opacity="0.20"/><rect x="26" y="119.6" width="79" height="1.6" rx="0.8" fill="#bfb5a0" opacity="0.34"/><rect x="5" y="147.1" width="67" height="1.8" rx="0.9" fill="#c2b8a4" opacity="0.23"/><rect x="124" y="14.8" width="120" height="3.3" rx="1.7" fill="#c2b8a4" opacity="0.30"/><rect x="54" y="63.0" width="118" height="2.6" rx="1.3" fill="#c2b8a4" opacity="0.34"/><rect x="77" y="193.0" width="106" height="2.7" rx="1.3" fill="#bfb5a0" opacity="0.38"/><rect x="131" y="131.0" width="57" height="2.7" rx="1.4" fill="#d3c9b8" opacity="0.23"/><rect x="72" y="127.9" width="115" height="3.1" rx="1.6" fill="#d3c9b8" opacity="0.22"/><rect x="-27" y="207.8" width="137" height="2.7" rx="1.3" fill="#c2b8a4" opacity="0.26"/><rect x="-2" y="14.8" width="96" height="2.0" rx="1.0" fill="#bfb5a0" opacity="0.26"/><rect x="41" y="208.0" width="60" height="1.9" rx="0.9" fill="#bfb5a0" opacity="0.34"/><rect x="69" y="86.8" width="45" height="3.4" rx="1.7" fill="#d3c9b8" opacity="0.38"/><rect x="79" y="2.5" width="52" height="2.3" rx="1.1" fill="#d3c9b8" opacity="0.45"/><rect x="-11" y="181.3" width="64" height="3.2" rx="1.6" fill="#d3c9b8" opacity="0.45"/><rect x="85" y="3.4" width="72" height="2.3" rx="1.2" fill="#d3c9b8" opacity="0.23"/><rect x="7" y="208.1" width="46" height="2.0" rx="1.0" fill="#c2b8a4" opacity="0.26"/><rect x="88" y="49.6" width="117" height="1.7" rx="0.9" fill="#c2b8a4" opacity="0.36"/></g><g filter="url(#b4)"><ellipse cx="50" cy="149" rx="8.6" ry="2.8" fill="#aba08b" opacity="0.32" transform="rotate(-1 50 149)"/><ellipse cx="177" cy="20" rx="8.7" ry="1.7" fill="#aba08b" opacity="0.32" transform="rotate(-15 177 20)"/><ellipse cx="185" cy="11" rx="6.4" ry="2.5" fill="#aba08b" opacity="0.40" transform="rotate(15 185 11)"/><ellipse cx="131" cy="6" rx="6.0" ry="1.8" fill="#aba08b" opacity="0.48" transform="rotate(-8 131 6)"/><ellipse cx="144" cy="98" rx="6.2" ry="2.4" fill="#aba08b" opacity="0.35" transform="rotate(4 144 98)"/><ellipse cx="131" cy="175" rx="8.1" ry="1.7" fill="#aba08b" opacity="0.46" transform="rotate(-5 131 175)"/><ellipse cx="209" cy="125" rx="5.0" ry="2.4" fill="#aba08b" opacity="0.41" transform="rotate(0 209 125)"/><ellipse cx="86" cy="128" rx="6.7" ry="2.9" fill="#aba08b" opacity="0.37" transform="rotate(-1 86 128)"/><ellipse cx="7" cy="162" rx="4.3" ry="3.0" fill="#aba08b" opacity="0.40" transform="rotate(2 7 162)"/></g></svg></div><div class="logo"><svg width="44" height="43" viewBox="0 0 44 43" font-family="Liberation Sans, sans-serif"><rect x="1.4" y="15.8" width="3.1" height="11.4" fill="#a86cc6"/><path d="M5.2 15.2H12.2V26.4H4.6Z" fill="#3a0716"/><path d="M9.4 16.8L6.6 26.4H8.8L9.3 24.4H11.2V22.6H9.8L10.6 19.6V16.8Z" fill="#fff"/><text x="13.4" y="25.8" font-size="12.4" font-weight="bold" fill="#3a0716" letter-spacing="-.25">rtens</text></svg></div><div class="brand">ARTENS</div><div class="price">18.99€/m²</div><div class="name">Barreiro 12mm</div></div>
<div class="card" style="left:91px;top:704px"><div class="img"><svg width="220" height="220" viewBox="0 0 220 220"><rect width="220" height="220" fill="#c4c0bb"/><g filter="url(#b2)"><rect x="-0" y="-1.0" width="61" height="4.7" fill="#a0968e" opacity="0.92"/><rect x="59" y="-1.0" width="33" height="4.7" fill="#8e857e" opacity="0.90"/><rect x="91" y="-1.0" width="58" height="4.7" fill="#a9a099" opacity="0.95"/><rect x="148" y="-1.0" width="33" height="4.7" fill="#cfd2d6" opacity="0.74"/><rect x="180" y="-1.0" width="39" height="4.7" fill="#b3a89f" opacity="0.66"/><rect x="218" y="-1.0" width="32" height="4.7" fill="#d5d3d0" opacity="0.90"/><rect x="-9" y="3.3" width="72" height="4.4" fill="#978d86" opacity="0.72"/><rect x="62" y="3.3" width="52" height="4.4" fill="#b3a89f" opacity="0.75"/><rect x="113" y="3.3" width="45" height="4.4" fill="#cfd2d6" opacity="0.73"/><rect x="157" y="3.3" width="37" height="4.4" fill="#a9a099" opacity="0.81"/><rect x="193" y="3.3" width="42" height="4.4" fill="#dddcd9" opacity="0.75"/><rect x="-1" y="7.4" width="27" height="4.7" fill="#a0968e" opacity="0.80"/><rect x="25" y="7.4" width="64" height="4.7" fill="#a9a099" opacity="0.56"/><rect x="88" y="7.4" width="49" height="4.7" fill="#a0968e" opacity="0.90"/><rect x="136" y="7.4" width="25" height="4.7" fill="#dddcd9" opacity="0.71"/><rect x="160" y="7.4" width="23" height="4.7" fill="#a9a099" opacity="0.89"/><rect x="182" y="7.4" width="51" height="4.7" fill="#b3a89f" opacity="0.92"/><rect x="-22" y="11.7" width="48" height="3.4" fill="#dddcd9" opacity="0.64"/><rect x="25" y="11.7" width="37" height="3.4" fill="#bcb6b0" opacity="0.68"/><rect x="60" y="11.7" width="71" height="3.4" fill="#cfd2d6" opacity="0.90"/><rect x="130" y="11.7" width="64" height="3.4" fill="#867d76" opacity="0.74"/><rect x="193" y="11.7" width="26" height="3.4" fill="#c8c4bf" opacity="0.71"/><rect x="217" y="11.7" width="20" height="3.4" fill="#867d76" opacity="0.92"/><rect x="-11" y="14.7" width="21" height="4.3" fill="#8e857e" opacity="0.93"/><rect x="9" y="14.7" width="28" height="4.3" fill="#c8c4bf" opacity="0.78"/><rect x="36" y="14.7" width="69" height="4.3" fill="#c8c4bf" opacity="0.57"/><rect x="104" y="14.7" width="23" height="4.3" fill="#dddcd9" opacity="0.78"/><rect x="125" y="14.7" width="45" height="4.3" fill="#e3e2e0" opacity="0.73"/><rect x="169" y="14.7" width="60" height="4.3" fill="#bcb6b0" opacity="0.58"/><rect x="-13" y="18.6" width="56" height="3.0" fill="#b3a89f" opacity="0.72"/><rect x="42" y="18.6" width="22" height="3.0" fill="#a9a099" opacity="0.67"/><rect x="63" y="18.6" width="44" height="3.0" fill="#978d86" opacity="0.88"/><rect x="106" y="18.6" width="65" height="3.0" fill="#b3a89f" opacity="0.56"/><rect x="170" y="18.6" width="57" height="3.0" fill="#cfd2d6" opacity="0.80"/><rect x="-0" y="21.2" width="33" height="4.6" fill="#c8c4bf" opacity="0.94"/><rect x="32" y="21.2" width="38" height="4.6" fill="#d5d3d0" opacity="0.82"/><rect x="69" y="21.2" width="37" height="4.6" fill="#cfd2d6" opacity="0.55"/><rect x="105" y="21.2" width="39" height="4.6" fill="#d5d3d0" opacity="0.69"/><rect x="143" y="21.2" width="22" height="4.6" fill="#a0968e" opacity="0.81"/><rect x="165" y="21.2" width="48" height="4.6" fill="#dddcd9" opacity="0.94"/><rect x="211" y="21.2" width="60" height="4.6" fill="#b3a89f" opacity="0.68"/><rect x="-5" y="25.5" width="25" height="4.6" fill="#cfd2d6" opacity="0.73"/><rect x="18" y="25.5" width="54" height="4.6" fill="#e3e2e0" opacity="0.74"/><rect x="71" y="25.5" width="71" height="4.6" fill="#b3a89f" opacity="0.92"/><rect x="141" y="25.5" width="52" height="4.6" fill="#dddcd9" opacity="0.86"/><rect x="192" y="25.5" width="28" height="4.6" fill="#bcb6b0" opacity="0.73"/><rect x="219" y="25.5" width="28" height="4.6" fill="#d5d3d0" opacity="0.78"/><rect x="-30" y="29.7" width="40" height="4.0" fill="#d5d3d0" opacity="0.94"/><rect x="9" y="29.7" width="56" height="4.0" fill="#bcb6b0" opacity="0.60"/><rect x="64" y="29.7" width="49" height="4.0" fill="#c8c4bf" opacity="0.78"/><rect x="112" y="29.7" width="66" height="4.0" fill="#bcb6b0" opacity="0.86"/><rect x="177" y="29.7" width="38" height="4.0" fill="#e3e2e0" opacity="0.94"/><rect x="215" y="29.7" width="57" height="4.0" fill="#b3a89f" opacity="0.56"/><rect x="-30" y="33.3" width="39" height="3.6" fill="#a0968e" opacity="0.57"/><rect x="8" y="33.3" width="71" height="3.6" fill="#a9a099" opacity="0.78"/><rect x="78" y="33.3" width="31" height="3.6" fill="#dddcd9" opacity="0.81"/><rect x="108" y="33.3" width="31" height="3.6" fill="#bcb6b0" opacity="0.58"/><rect x="138" y="33.3" width="69" height="3.6" fill="#c8c4bf" opacity="0.76"/><rect x="206" y="33.3" width="69" height="3.6" fill="#d5d3d0" opacity="0.68"/><rect x="-35" y="36.5" width="40" height="4.1" fill="#d5d3d0" opacity="0.72"/><rect x="4" y="36.5" width="69" height="4.1" fill="#cfd2d6" opacity="0.85"/><rect x="72" y="36.5" width="27" height="4.1" fill="#a0968e" opacity="0.74"/><rect x="98" y="36.5" width="46" height="4.1" fill="#c8c4bf" opacity="0.74"/><rect x="143" y="36.5" width="29" height="4.1" fill="#dddcd9" opacity="0.72"/><rect x="171" y="36.5" width="72" height="4.1" fill="#a9a099" opacity="0.65"/><rect x="-1" y="40.2" width="38" height="4.7" fill="#bcb6b0" opacity="0.62"/><rect x="36" y="40.2" width="57" height="4.7" fill="#8e857e" opacity="0.79"/><rect x="92" y="40.2" width="45" height="4.7" fill="#8e857e" opacity="0.68"/><rect x="136" y="40.2" width="70" height="4.7" fill="#e3e2e0" opacity="0.87"/><rect x="205" y="40.2" width="41" height="4.7" fill="#c8c4bf" opacity="0.71"/><rect x="-30" y="44.5" width="28" height="4.1" fill="#cfd2d6" opacity="0.73"/><rect x="-3" y="44.5" width="46" height="4.1" fill="#a9a099" opacity="0.78"/><rect x="42" y="44.5" width="49" height="4.1" fill="#d5d3d0" opacity="0.89"/><rect x="90" y="44.5" width="29" height="4.1" fill="#978d86" opacity="0.75"/><rect x="118" y="44.5" width="57" height="4.1" fill="#a9a099" opacity="0.71"/><rect x="173" y="44.5" width="38" height="4.1" fill="#c8c4bf" opacity="0.65"/><rect x="210" y="44.5" width="72" height="4.1" fill="#867d76" opacity="0.91"/><rect x="-35" y="48.2" width="58" height="3.2" fill="#867d76" opacity="0.62"/><rect x="22" y="48.2" width="34" height="3.2" fill="#867d76" opacity="0.61"/><rect x="55" y="48.2" width="57" height="3.2" fill="#d5d3d0" opacity="0.93"/><rect x="110" y="48.2" width="46" height="3.2" fill="#978d86" opacity="0.95"/><rect x="156" y="48.2" width="56" height="3.2" fill="#d5d3d0" opacity="0.71"/><rect x="211" y="48.2" width="43" height="3.2" fill="#e3e2e0" opacity="0.66"/><rect x="-26" y="51.1" width="56" height="3.7" fill="#bcb6b0" opacity="0.71"/><rect x="29" y="51.1" width="65" height="3.7" fill="#c8c4bf" opacity="0.86"/><rect x="93" y="51.1" width="37" height="3.7" fill="#b3a89f" opacity="0.69"/><rect x="130" y="51.1" width="39" height="3.7" fill="#cfd2d6" opacity="0.82"/><rect x="167" y="51.1" width="24" height="3.7" fill="#a0968e" opacity="0.75"/><rect x="191" y="51.1" width="74" height="3.7" fill="#a9a099" opacity="0.64"/><rect x="-3" y="54.4" width="58" height="4.2" fill="#a9a099" opacity="0.67"/><rect x="55" y="54.4" width="31" height="4.2" fill="#c8c4bf" opacity="0.65"/><rect x="85" y="54.4" width="47" height="4.2" fill="#a0968e" opacity="0.89"/><rect x="131" y="54.4" width="67" height="4.2" fill="#c8c4bf" opacity="0.92"/><rect x="197" y="54.4" width="28" height="4.2" fill="#978d86" opacity="0.81"/><rect x="-37" y="58.2" width="67" height="3.4" fill="#e3e2e0" opacity="0.86"/><rect x="29" y="58.2" width="64" height="3.4" fill="#a9a099" opacity="0.68"/><rect x="92" y="58.2" width="25" height="3.4" fill="#e3e2e0" opacity="0.57"/><rect x="117" y="58.2" width="63" height="3.4" fill="#d5d3d0" opacity="0.57"/><rect x="178" y="58.2" width="67" height="3.4" fill="#cfd2d6" opacity="0.76"/><rect x="-23" y="61.2" width="37" height="4.1" fill="#cfd2d6" opacity="0.72"/><rect x="13" y="61.2" width="51" height="4.1" fill="#bcb6b0" opacity="0.70"/><rect x="62" y="61.2" width="19" height="4.1" fill="#c8c4bf" opacity="0.90"/><rect x="81" y="61.2" width="67" height="4.1" fill="#bcb6b0" opacity="0.64"/><rect x="147" y="61.2" width="59" height="4.1" fill="#bcb6b0" opacity="0.92"/><rect x="204" y="61.2" width="44" height="4.1" fill="#dddcd9" opacity="0.57"/><rect x="-25" y="64.8" width="61" height="3.2" fill="#978d86" opacity="0.87"/><rect x="35" y="64.8" width="39" height="3.2" fill="#d5d3d0" opacity="0.76"/><rect x="74" y="64.8" width="71" height="3.2" fill="#dddcd9" opacity="0.93"/><rect x="143" y="64.8" width="22" height="3.2" fill="#978d86" opacity="0.93"/><rect x="164" y="64.8" width="69" height="3.2" fill="#978d86" opacity="0.57"/><rect x="-6" y="67.6" width="52" height="3.9" fill="#c8c4bf" opacity="0.64"/><rect x="46" y="67.6" width="27" height="3.9" fill="#a0968e" opacity="0.75"/><rect x="72" y="67.6" width="41" height="3.9" fill="#d5d3d0" opacity="0.87"/><rect x="112" y="67.6" width="31" height="3.9" fill="#a9a099" opacity="0.94"/><rect x="142" y="67.6" width="72" height="3.9" fill="#cfd2d6" opacity="0.81"/><rect x="213" y="67.6" width="47" height="3.9" fill="#dddcd9" opacity="0.86"/><rect x="-16" y="71.1" width="72" height="4.0" fill="#e3e2e0" opacity="0.66"/><rect x="55" y="71.1" width="71" height="4.0" fill="#bcb6b0" opacity="0.59"/><rect x="125" y="71.1" width="34" height="4.0" fill="#a0968e" opacity="0.76"/><rect x="159" y="71.1" width="20" height="4.0" fill="#867d76" opacity="0.73"/><rect x="177" y="71.1" width="62" height="4.0" fill="#b3a89f" opacity="0.66"/><rect x="-21" y="74.7" width="75" height="3.1" fill="#d5d3d0" opacity="0.82"/><rect x="53" y="74.7" width="61" height="3.1" fill="#a9a099" opacity="0.75"/><rect x="113" y="74.7" width="39" height="3.1" fill="#a0968e" opacity="0.92"/><rect x="151" y="74.7" width="73" height="3.1" fill="#dddcd9" opacity="0.67"/><rect x="-10" y="77.4" width="69" height="4.2" fill="#867d76" opacity="0.72"/><rect x="59" y="77.4" width="27" height="4.2" fill="#c8c4bf" opacity="0.65"/><rect x="84" y="77.4" width="20" height="4.2" fill="#978d86" opacity="0.81"/><rect x="103" y="77.4" width="57" height="4.2" fill="#8e857e" opacity="0.95"/><rect x="159" y="77.4" width="69" height="4.2" fill="#cfd2d6" opacity="0.72"/><rect x="-24" y="81.2" width="56" height="3.9" fill="#a9a099" opacity="0.70"/><rect x="31" y="81.2" width="51" height="3.9" fill="#a9a099" opacity="0.81"/><rect x="81" y="81.2" width="22" height="3.9" fill="#c8c4bf" opacity="0.81"/><rect x="102" y="81.2" width="53" height="3.9" fill="#a0968e" opacity="0.86"/><rect x="154" y="81.2" width="42" height="3.9" fill="#cfd2d6" opacity="0.73"/><rect x="195" y="81.2" width="52" height="3.9" fill="#b3a89f" opacity="0.82"/><rect x="-15" y="84.7" width="23" height="4.5" fill="#867d76" opacity="0.82"/><rect x="7" y="84.7" width="55" height="4.5" fill="#e3e2e0" opacity="0.60"/><rect x="61" y="84.7" width="23" height="4.5" fill="#b3a89f" opacity="0.63"/><rect x="83" y="84.7" width="23" height="4.5" fill="#cfd2d6" opacity="0.64"/><rect x="105" y="84.7" width="66" height="4.5" fill="#b3a89f" opacity="0.83"/><rect x="170" y="84.7" width="43" height="4.5" fill="#a9a099" opacity="0.72"/><rect x="212" y="84.7" width="51" height="4.5" fill="#bcb6b0" opacity="0.56"/><rect x="-3" y="88.8" width="24" height="3.0" fill="#c8c4bf" opacity="0.94"/><rect x="20" y="88.8" width="29" height="3.0" fill="#b3a89f" opacity="0.83"/><rect x="48" y="88.8" width="45" height="3.0" fill="#978d86" opacity="0.57"/><rect x="93" y="88.8" width="26" height="3.0" fill="#dddcd9" opacity="0.71"/><rect x="117" y="88.8" width="71" height="3.0" fill="#8e857e" opacity="0.60"/><rect x="187" y="88.8" width="35" height="3.0" fill="#978d86" opacity="0.67"/><rect x="-33" y="91.4" width="54" height="3.7" fill="#d5d3d0" opacity="0.93"/><rect x="19" y="91.4" width="64" height="3.7" fill="#867d76" opacity="0.70"/><rect x="82" y="91.4" width="50" height="3.7" fill="#c8c4bf" opacity="0.80"/><rect x="131" y="91.4" width="35" height="3.7" fill="#a0968e" opacity="0.67"/><rect x="164" y="91.4" width="73" height="3.7" fill="#d5d3d0" opacity="0.55"/><rect x="-38" y="94.7" width="32" height="3.7" fill="#cfd2d6" opacity="0.80"/><rect x="-7" y="94.7" width="33" height="3.7" fill="#8e857e" opacity="0.63"/><rect x="26" y="94.7" width="72" height="3.7" fill="#cfd2d6" opacity="0.85"/><rect x="96" y="94.7" width="21" height="3.7" fill="#867d76" opacity="0.88"/><rect x="116" y="94.7" width="32" height="3.7" fill="#bcb6b0" opacity="0.87"/><rect x="147" y="94.7" width="36" height="3.7" fill="#8e857e" opacity="0.62"/><rect x="182" y="94.7" width="27" height="3.7" fill="#a0968e" opacity="0.57"/><rect x="209" y="94.7" width="54" height="3.7" fill="#cfd2d6" opacity="0.86"/><rect x="-3" y="98.0" width="75" height="4.5" fill="#e3e2e0" opacity="0.93"/><rect x="71" y="98.0" width="55" height="4.5" fill="#978d86" opacity="0.57"/><rect x="125" y="98.0" width="66" height="4.5" fill="#d5d3d0" opacity="0.79"/><rect x="191" y="98.0" width="70" height="4.5" fill="#8e857e" opacity="0.62"/><rect x="-36" y="102.1" width="31" height="4.1" fill="#d5d3d0" opacity="0.72"/><rect x="-6" y="102.1" width="71" height="4.1" fill="#978d86" opacity="0.65"/><rect x="64" y="102.1" width="55" height="4.1" fill="#8e857e" opacity="0.85"/><rect x="118" y="102.1" width="76" height="4.1" fill="#978d86" opacity="0.86"/><rect x="193" y="102.1" width="22" height="4.1" fill="#8e857e" opacity="0.77"/><rect x="214" y="102.1" width="27" height="4.1" fill="#dddcd9" opacity="0.77"/><rect x="-24" y="105.8" width="50" height="3.6" fill="#cfd2d6" opacity="0.84"/><rect x="25" y="105.8" width="41" height="3.6" fill="#dddcd9" opacity="0.57"/><rect x="65" y="105.8" width="52" height="3.6" fill="#d5d3d0" opacity="0.90"/><rect x="116" y="105.8" width="63" height="3.6" fill="#978d86" opacity="0.62"/><rect x="178" y="105.8" width="56" height="3.6" fill="#d5d3d0" opacity="0.68"/><rect x="-35" y="109.0" width="22" height="3.3" fill="#8e857e" opacity="0.72"/><rect x="-14" y="109.0" width="65" height="3.3" fill="#b3a89f" opacity="0.77"/><rect x="49" y="109.0" width="52" height="3.3" fill="#e3e2e0" opacity="0.75"/><rect x="101" y="109.0" width="60" height="3.3" fill="#c8c4bf" opacity="0.64"/><rect x="159" y="109.0" width="59" height="3.3" fill="#cfd2d6" opacity="0.64"/><rect x="218" y="109.0" width="41" height="3.3" fill="#867d76" opacity="0.65"/><rect x="-11" y="111.9" width="50" height="3.2" fill="#d5d3d0" opacity="0.86"/><rect x="37" y="111.9" width="40" height="3.2" fill="#cfd2d6" opacity="0.92"/><rect x="76" y="111.9" width="66" height="3.2" fill="#c8c4bf" opacity="0.79"/><rect x="141" y="111.9" width="47" height="3.2" fill="#bcb6b0" opacity="0.73"/><rect x="187" y="111.9" width="63" height="3.2" fill="#978d86" opacity="0.68"/><rect x="-10" y="114.7" width="51" height="3.8" fill="#dddcd9" opacity="0.70"/><rect x="40" y="114.7" width="42" height="3.8" fill="#867d76" opacity="0.79"/><rect x="81" y="114.7" width="27" height="3.8" fill="#bcb6b0" opacity="0.79"/><rect x="108" y="114.7" width="49" height="3.8" fill="#dddcd9" opacity="0.61"/><rect x="155" y="114.7" width="42" height="3.8" fill="#a9a099" opacity="0.87"/><rect x="196" y="114.7" width="70" height="3.8" fill="#c8c4bf" opacity="0.93"/><rect x="-22" y="118.1" width="47" height="4.2" fill="#b3a89f" opacity="0.88"/><rect x="23" y="118.1" width="72" height="4.2" fill="#c8c4bf" opacity="0.68"/><rect x="94" y="118.1" width="33" height="4.2" fill="#dddcd9" opacity="0.86"/><rect x="126" y="118.1" width="57" height="4.2" fill="#d5d3d0" opacity="0.80"/><rect x="182" y="118.1" width="54" height="4.2" fill="#b3a89f" opacity="0.57"/><rect x="-19" y="121.9" width="46" height="3.9" fill="#e3e2e0" opacity="0.68"/><rect x="26" y="121.9" width="62" height="3.9" fill="#a0968e" opacity="0.86"/><rect x="86" y="121.9" width="20" height="3.9" fill="#8e857e" opacity="0.64"/><rect x="106" y="121.9" width="34" height="3.9" fill="#d5d3d0" opacity="0.89"/><rect x="139" y="121.9" width="28" height="3.9" fill="#978d86" opacity="0.65"/><rect x="166" y="121.9" width="55" height="3.9" fill="#978d86" opacity="0.58"/><rect x="220" y="121.9" width="29" height="3.9" fill="#a0968e" opacity="0.72"/><rect x="-22" y="125.4" width="40" height="3.2" fill="#e3e2e0" opacity="0.89"/><rect x="17" y="125.4" width="20" height="3.2" fill="#c8c4bf" opacity="0.94"/><rect x="36" y="125.4" width="48" height="3.2" fill="#8e857e" opacity="0.92"/><rect x="84" y="125.4" width="44" height="3.2" fill="#978d86" opacity="0.73"/><rect x="126" y="125.4" width="47" height="3.2" fill="#bcb6b0" opacity="0.78"/><rect x="172" y="125.4" width="73" height="3.2" fill="#867d76" opacity="0.76"/><rect x="-3" y="128.2" width="33" height="3.5" fill="#dddcd9" opacity="0.85"/><rect x="29" y="128.2" width="55" height="3.5" fill="#dddcd9" opacity="0.77"/><rect x="84" y="128.2" width="21" height="3.5" fill="#867d76" opacity="0.91"/><rect x="104" y="128.2" width="59" height="3.5" fill="#8e857e" opacity="0.65"/><rect x="162" y="128.2" width="63" height="3.5" fill="#d5d3d0" opacity="0.89"/><rect x="-11" y="131.3" width="61" height="4.1" fill="#a0968e" opacity="0.69"/><rect x="49" y="131.3" width="24" height="4.1" fill="#b3a89f" opacity="0.75"/><rect x="73" y="131.3" width="32" height="4.1" fill="#bcb6b0" opacity="0.62"/><rect x="104" y="131.3" width="39" height="4.1" fill="#867d76" opacity="0.79"/><rect x="142" y="131.3" width="60" height="4.1" fill="#a9a099" opacity="0.76"/><rect x="201" y="131.3" width="63" height="4.1" fill="#c8c4bf" opacity="0.75"/><rect x="-3" y="135.0" width="34" height="3.6" fill="#b3a89f" opacity="0.86"/><rect x="30" y="135.0" width="44" height="3.6" fill="#a0968e" opacity="0.63"/><rect x="73" y="135.0" width="51" height="3.6" fill="#d5d3d0" opacity="0.87"/><rect x="123" y="135.0" width="56" height="3.6" fill="#cfd2d6" opacity="0.72"/><rect x="179" y="135.0" width="67" height="3.6" fill="#867d76" opacity="0.75"/><rect x="-19" y="138.2" width="73" height="3.0" fill="#d5d3d0" opacity="0.66"/><rect x="53" y="138.2" width="20" height="3.0" fill="#c8c4bf" opacity="0.75"/><rect x="72" y="138.2" width="50" height="3.0" fill="#e3e2e0" opacity="0.56"/><rect x="121" y="138.2" width="20" height="3.0" fill="#bcb6b0" opacity="0.72"/><rect x="140" y="138.2" width="23" height="3.0" fill="#d5d3d0" opacity="0.86"/><rect x="162" y="138.2" width="29" height="3.0" fill="#a0968e" opacity="0.73"/><rect x="190" y="138.2" width="31" height="3.0" fill="#dddcd9" opacity="0.94"/><rect x="219" y="138.2" width="54" height="3.0" fill="#cfd2d6" opacity="0.56"/><rect x="-8" y="140.8" width="66" height="4.5" fill="#e3e2e0" opacity="0.64"/><rect x="58" y="140.8" width="39" height="4.5" fill="#b3a89f" opacity="0.63"/><rect x="96" y="140.8" width="23" height="4.5" fill="#d5d3d0" opacity="0.72"/><rect x="117" y="140.8" width="26" height="4.5" fill="#d5d3d0" opacity="0.91"/><rect x="143" y="140.8" width="65" height="4.5" fill="#978d86" opacity="0.85"/><rect x="207" y="140.8" width="51" height="4.5" fill="#a9a099" opacity="0.64"/><rect x="-6" y="144.9" width="21" height="3.8" fill="#8e857e" opacity="0.94"/><rect x="14" y="144.9" width="21" height="3.8" fill="#867d76" opacity="0.90"/><rect x="34" y="144.9" width="30" height="3.8" fill="#dddcd9" opacity="0.58"/><rect x="63" y="144.9" width="38" height="3.8" fill="#b3a89f" opacity="0.93"/><rect x="100" y="144.9" width="75" height="3.8" fill="#cfd2d6" opacity="0.75"/><rect x="175" y="144.9" width="21" height="3.8" fill="#c8c4bf" opacity="0.83"/><rect x="195" y="144.9" width="53" height="3.8" fill="#a0968e" opacity="0.75"/><rect x="-24" y="148.3" width="23" height="4.7" fill="#a0968e" opacity="0.74"/><rect x="-1" y="148.3" width="51" height="4.7" fill="#d5d3d0" opacity="0.90"/><rect x="49" y="148.3" width="63" height="4.7" fill="#cfd2d6" opacity="0.60"/><rect x="110" y="148.3" width="29" height="4.7" fill="#e3e2e0" opacity="0.76"/><rect x="138" y="148.3" width="25" height="4.7" fill="#c8c4bf" opacity="0.93"/><rect x="162" y="148.3" width="63" height="4.7" fill="#e3e2e0" opacity="0.73"/><rect x="-15" y="152.6" width="49" height="3.4" fill="#c8c4bf" opacity="0.59"/><rect x="33" y="152.6" width="36" height="3.4" fill="#e3e2e0" opacity="0.94"/><rect x="67" y="152.6" width="41" height="3.4" fill="#cfd2d6" opacity="0.69"/><rect x="107" y="152.6" width="41" height="3.4" fill="#a9a099" opacity="0.59"/><rect x="147" y="152.6" width="49" height="3.4" fill="#8e857e" opacity="0.89"/><rect x="196" y="152.6" width="19" height="3.4" fill="#867d76" opacity="0.66"/><rect x="214" y="152.6" width="56" height="3.4" fill="#a9a099" opacity="0.75"/><rect x="-8" y="155.6" width="34" height="3.9" fill="#8e857e" opacity="0.94"/><rect x="25" y="155.6" width="69" height="3.9" fill="#cfd2d6" opacity="0.80"/><rect x="93" y="155.6" width="24" height="3.9" fill="#bcb6b0" opacity="0.73"/><rect x="116" y="155.6" width="70" height="3.9" fill="#a0968e" opacity="0.85"/><rect x="185" y="155.6" width="74" height="3.9" fill="#bcb6b0" opacity="0.64"/><rect x="-27" y="159.2" width="24" height="3.2" fill="#867d76" opacity="0.63"/><rect x="-4" y="159.2" width="70" height="3.2" fill="#d5d3d0" opacity="0.71"/><rect x="64" y="159.2" width="44" height="3.2" fill="#867d76" opacity="0.56"/><rect x="108" y="159.2" width="74" height="3.2" fill="#8e857e" opacity="0.80"/><rect x="180" y="159.2" width="32" height="3.2" fill="#bcb6b0" opacity="0.65"/><rect x="212" y="159.2" width="59" height="3.2" fill="#dddcd9" opacity="0.90"/><rect x="-22" y="162.0" width="60" height="3.1" fill="#c8c4bf" opacity="0.62"/><rect x="37" y="162.0" width="31" height="3.1" fill="#a9a099" opacity="0.69"/><rect x="67" y="162.0" width="56" height="3.1" fill="#978d86" opacity="0.81"/><rect x="123" y="162.0" width="26" height="3.1" fill="#867d76" opacity="0.82"/><rect x="147" y="162.0" width="74" height="3.1" fill="#cfd2d6" opacity="0.79"/><rect x="-40" y="164.7" width="36" height="3.8" fill="#8e857e" opacity="0.68"/><rect x="-4" y="164.7" width="34" height="3.8" fill="#bcb6b0" opacity="0.55"/><rect x="28" y="164.7" width="38" height="3.8" fill="#a0968e" opacity="0.92"/><rect x="65" y="164.7" width="61" height="3.8" fill="#a0968e" opacity="0.83"/><rect x="125" y="164.7" width="35" height="3.8" fill="#bcb6b0" opacity="0.58"/><rect x="158" y="164.7" width="61" height="3.8" fill="#dddcd9" opacity="0.68"/><rect x="219" y="164.7" width="74" height="3.8" fill="#978d86" opacity="0.72"/><rect x="-4" y="168.1" width="50" height="4.1" fill="#bcb6b0" opacity="0.88"/><rect x="45" y="168.1" width="46" height="4.1" fill="#978d86" opacity="0.77"/><rect x="90" y="168.1" width="21" height="4.1" fill="#a0968e" opacity="0.94"/><rect x="111" y="168.1" width="27" height="4.1" fill="#a0968e" opacity="0.77"/><rect x="137" y="168.1" width="72" height="4.1" fill="#c8c4bf" opacity="0.74"/><rect x="208" y="168.1" width="53" height="4.1" fill="#e3e2e0" opacity="0.69"/><rect x="-37" y="171.7" width="44" height="4.0" fill="#dddcd9" opacity="0.92"/><rect x="6" y="171.7" width="31" height="4.0" fill="#c8c4bf" opacity="0.91"/><rect x="36" y="171.7" width="32" height="4.0" fill="#978d86" opacity="0.63"/><rect x="67" y="171.7" width="69" height="4.0" fill="#a9a099" opacity="0.83"/><rect x="135" y="171.7" width="75" height="4.0" fill="#bcb6b0" opacity="0.89"/><rect x="208" y="171.7" width="38" height="4.0" fill="#e3e2e0" opacity="0.64"/><rect x="-37" y="175.3" width="62" height="4.6" fill="#bcb6b0" opacity="0.63"/><rect x="24" y="175.3" width="65" height="4.6" fill="#d5d3d0" opacity="0.60"/><rect x="88" y="175.3" width="32" height="4.6" fill="#c8c4bf" opacity="0.87"/><rect x="120" y="175.3" width="62" height="4.6" fill="#c8c4bf" opacity="0.82"/><rect x="181" y="175.3" width="39" height="4.6" fill="#8e857e" opacity="0.81"/><rect x="218" y="175.3" width="35" height="4.6" fill="#d5d3d0" opacity="0.77"/><rect x="-40" y="179.6" width="38" height="3.1" fill="#c8c4bf" opacity="0.61"/><rect x="-2" y="179.6" width="66" height="3.1" fill="#b3a89f" opacity="0.66"/><rect x="63" y="179.6" width="70" height="3.1" fill="#867d76" opacity="0.86"/><rect x="132" y="179.6" width="38" height="3.1" fill="#a0968e" opacity="0.61"/><rect x="169" y="179.6" width="52" height="3.1" fill="#867d76" opacity="0.55"/><rect x="219" y="179.6" width="44" height="3.1" fill="#dddcd9" opacity="0.59"/><rect x="-32" y="182.2" width="37" height="3.2" fill="#d5d3d0" opacity="0.59"/><rect x="4" y="182.2" width="25" height="3.2" fill="#867d76" opacity="0.77"/><rect x="29" y="182.2" width="55" height="3.2" fill="#bcb6b0" opacity="0.76"/><rect x="82" y="182.2" width="68" height="3.2" fill="#a9a099" opacity="0.57"/><rect x="149" y="182.2" width="28" height="3.2" fill="#867d76" opacity="0.57"/><rect x="177" y="182.2" width="60" height="3.2" fill="#bcb6b0" opacity="0.93"/><rect x="-7" y="185.0" width="39" height="3.8" fill="#b3a89f" opacity="0.66"/><rect x="31" y="185.0" width="67" height="3.8" fill="#bcb6b0" opacity="0.74"/><rect x="97" y="185.0" width="46" height="3.8" fill="#a9a099" opacity="0.72"/><rect x="142" y="185.0" width="24" height="3.8" fill="#c8c4bf" opacity="0.75"/><rect x="166" y="185.0" width="62" height="3.8" fill="#dddcd9" opacity="0.91"/><rect x="-39" y="188.4" width="50" height="3.3" fill="#8e857e" opacity="0.89"/><rect x="11" y="188.4" width="64" height="3.3" fill="#a9a099" opacity="0.83"/><rect x="74" y="188.4" width="54" height="3.3" fill="#d5d3d0" opacity="0.65"/><rect x="127" y="188.4" width="52" height="3.3" fill="#e3e2e0" opacity="0.84"/><rect x="177" y="188.4" width="35" height="3.3" fill="#d5d3d0" opacity="0.72"/><rect x="211" y="188.4" width="61" height="3.3" fill="#c8c4bf" opacity="0.64"/><rect x="-33" y="191.3" width="50" height="4.1" fill="#978d86" opacity="0.77"/><rect x="16" y="191.3" width="45" height="4.1" fill="#8e857e" opacity="0.81"/><rect x="60" y="191.3" width="30" height="4.1" fill="#d5d3d0" opacity="0.79"/><rect x="90" y="191.3" width="71" height="4.1" fill="#a9a099" opacity="0.91"/><rect x="159" y="191.3" width="36" height="4.1" fill="#b3a89f" opacity="0.81"/><rect x="194" y="191.3" width="71" height="4.1" fill="#978d86" opacity="0.63"/><rect x="-35" y="195.0" width="51" height="3.5" fill="#978d86" opacity="0.63"/><rect x="14" y="195.0" width="37" height="3.5" fill="#dddcd9" opacity="0.80"/><rect x="50" y="195.0" width="29" height="3.5" fill="#e3e2e0" opacity="0.69"/><rect x="79" y="195.0" width="40" height="3.5" fill="#a9a099" opacity="0.63"/><rect x="118" y="195.0" width="49" height="3.5" fill="#978d86" opacity="0.72"/><rect x="166" y="195.0" width="52" height="3.5" fill="#e3e2e0" opacity="0.79"/><rect x="217" y="195.0" width="36" height="3.5" fill="#c8c4bf" opacity="0.80"/><rect x="-16" y="198.1" width="39" height="3.6" fill="#d5d3d0" opacity="0.66"/><rect x="22" y="198.1" width="57" height="3.6" fill="#dddcd9" opacity="0.57"/><rect x="78" y="198.1" width="53" height="3.6" fill="#978d86" opacity="0.70"/><rect x="130" y="198.1" width="41" height="3.6" fill="#867d76" opacity="0.92"/><rect x="170" y="198.1" width="34" height="3.6" fill="#bcb6b0" opacity="0.76"/><rect x="203" y="198.1" width="21" height="3.6" fill="#dddcd9" opacity="0.74"/><rect x="-9" y="201.2" width="60" height="4.5" fill="#867d76" opacity="0.63"/><rect x="51" y="201.2" width="28" height="4.5" fill="#dddcd9" opacity="0.74"/><rect x="78" y="201.2" width="44" height="4.5" fill="#c8c4bf" opacity="0.58"/><rect x="120" y="201.2" width="73" height="4.5" fill="#8e857e" opacity="0.65"/><rect x="192" y="201.2" width="21" height="4.5" fill="#a9a099" opacity="0.73"/><rect x="212" y="201.2" width="60" height="4.5" fill="#e3e2e0" opacity="0.73"/><rect x="-24" y="205.3" width="39" height="3.6" fill="#8e857e" opacity="0.90"/><rect x="14" y="205.3" width="24" height="3.6" fill="#c8c4bf" opacity="0.65"/><rect x="38" y="205.3" width="35" height="3.6" fill="#cfd2d6" opacity="0.65"/><rect x="72" y="205.3" width="53" height="3.6" fill="#978d86" opacity="0.68"/><rect x="123" y="205.3" width="33" height="3.6" fill="#a0968e" opacity="0.66"/><rect x="155" y="205.3" width="66" height="3.6" fill="#867d76" opacity="0.78"/><rect x="220" y="205.3" width="37" height="3.6" fill="#e3e2e0" opacity="0.81"/><rect x="-9" y="208.6" width="32" height="4.7" fill="#8e857e" opacity="0.82"/><rect x="22" y="208.6" width="38" height="4.7" fill="#b3a89f" opacity="0.91"/><rect x="59" y="208.6" width="56" height="4.7" fill="#867d76" opacity="0.57"/><rect x="114" y="208.6" width="76" height="4.7" fill="#cfd2d6" opacity="0.66"/><rect x="189" y="208.6" width="24" height="4.7" fill="#867d76" opacity="0.91"/><rect x="211" y="208.6" width="74" height="4.7" fill="#a0968e" opacity="0.91"/><rect x="-29" y="212.8" width="53" height="4.6" fill="#e3e2e0" opacity="0.73"/><rect x="24" y="212.8" width="64" height="4.6" fill="#b3a89f" opacity="0.57"/><rect x="86" y="212.8" width="62" height="4.6" fill="#978d86" opacity="0.66"/><rect x="147" y="212.8" width="25" height="4.6" fill="#cfd2d6" opacity="0.79"/><rect x="171" y="212.8" width="28" height="4.6" fill="#b3a89f" opacity="0.90"/><rect x="197" y="212.8" width="42" height="4.6" fill="#c8c4bf" opacity="0.59"/><rect x="-35" y="217.0" width="22" height="4.3" fill="#a0968e" opacity="0.77"/><rect x="-14" y="217.0" width="45" height="4.3" fill="#8e857e" opacity="0.92"/><rect x="30" y="217.0" width="34" height="4.3" fill="#8e857e" opacity="0.61"/><rect x="63" y="217.0" width="48" height="4.3" fill="#cfd2d6" opacity="0.69"/><rect x="110" y="217.0" width="38" height="4.3" fill="#8e857e" opacity="0.73"/><rect x="147" y="217.0" width="26" height="4.3" fill="#d5d3d0" opacity="0.73"/><rect x="172" y="217.0" width="53" height="4.3" fill="#c8c4bf" opacity="0.78"/></g></svg></div><div class="logo"><svg width="44" height="43" viewBox="0 0 44 43" font-family="Liberation Sans, sans-serif"><rect x="1.4" y="15.8" width="3.1" height="11.4" fill="#a86cc6"/><path d="M5.2 15.2H12.2V26.4H4.6Z" fill="#3a0716"/><path d="M9.4 16.8L6.6 26.4H8.8L9.3 24.4H11.2V22.6H9.8L10.6 19.6V16.8Z" fill="#fff"/><text x="13.4" y="25.8" font-size="12.4" font-weight="bold" fill="#3a0716" letter-spacing="-.25">rtens</text></svg></div><div class="brand">ARTENS</div><div class="price"></div><div class="name"></div></div>
<div class="card" style="left:326px;top:704px"><div class="img"><svg width="220" height="220" viewBox="0 0 220 220"><rect width="220" height="220" fill="#cc9d77"/><g filter="url(#b3)"><rect x="-10" y="-10" width="60" height="240" fill="#d1a47e" opacity="0.5"/><rect x="50" y="-10" width="40" height="240" fill="#c5956d" opacity="0.4"/><rect x="90" y="-10" width="45" height="240" fill="#cc9d76" opacity="0.3"/><rect x="135" y="-10" width="40" height="240" fill="#c39169" opacity="0.45"/><rect x="175" y="-10" width="55" height="240" fill="#cfa07a" opacity="0.4"/></g><g filter="url(#b3)"><rect x="73" y="97.2" width="48" height="5.9" rx="2.9" fill="#c29068" opacity="0.46"/><rect x="24" y="63.8" width="71" height="4.4" rx="2.2" fill="#d7ab86" opacity="0.42"/><rect x="-22" y="46.9" width="87" height="6.6" rx="3.3" fill="#d7ab86" opacity="0.26"/><rect x="124" y="101.2" width="35" height="6.6" rx="3.3" fill="#d7ab86" opacity="0.50"/><rect x="63" y="17.1" width="76" height="5.2" rx="2.6" fill="#c29068" opacity="0.36"/><rect x="41" y="7.8" width="67" height="8.7" rx="4.3" fill="#d3a680" opacity="0.46"/><rect x="25" y="32.3" width="76" height="6.1" rx="3.1" fill="#d7ab86" opacity="0.33"/><rect x="84" y="186.7" width="54" height="4.0" rx="2.0" fill="#c29068" opacity="0.46"/><rect x="82" y="174.7" width="57" height="8.5" rx="4.3" fill="#c29068" opacity="0.46"/><rect x="198" y="155.0" width="30" height="6.9" rx="3.5" fill="#c29068" opacity="0.47"/><rect x="131" y="132.0" width="27" height="3.3" rx="1.6" fill="#c29068" opacity="0.38"/><rect x="107" y="179.4" width="87" height="7.7" rx="3.8" fill="#bf8d66" opacity="0.33"/><rect x="29" y="85.5" width="71" height="6.3" rx="3.1" fill="#d3a680" opacity="0.48"/><rect x="191" y="167.9" width="32" height="7.1" rx="3.6" fill="#bf8d66" opacity="0.47"/><rect x="99" y="51.0" width="70" height="4.4" rx="2.2" fill="#bf8d66" opacity="0.48"/><rect x="73" y="6.6" width="32" height="3.9" rx="1.9" fill="#c29068" opacity="0.47"/><rect x="-4" y="155.0" width="55" height="4.6" rx="2.3" fill="#c29068" opacity="0.42"/><rect x="-5" y="45.9" width="85" height="6.0" rx="3.0" fill="#c29068" opacity="0.41"/><rect x="17" y="86.7" width="43" height="5.7" rx="2.9" fill="#bf8d66" opacity="0.47"/><rect x="21" y="39.0" width="82" height="5.6" rx="2.8" fill="#c29068" opacity="0.46"/><rect x="63" y="2.9" width="81" height="4.3" rx="2.1" fill="#d7ab86" opacity="0.39"/><rect x="126" y="172.6" width="88" height="8.1" rx="4.0" fill="#c29068" opacity="0.31"/><rect x="71" y="27.6" width="67" height="4.3" rx="2.1" fill="#d3a680" opacity="0.44"/><rect x="107" y="10.9" width="89" height="3.6" rx="1.8" fill="#d3a680" opacity="0.45"/><rect x="47" y="36.1" width="72" height="3.3" rx="1.7" fill="#d7ab86" opacity="0.35"/><rect x="80" y="157.5" width="50" height="4.3" rx="2.2" fill="#d3a680" opacity="0.31"/><rect x="-4" y="198.3" width="51" height="6.7" rx="3.4" fill="#d3a680" opacity="0.35"/><rect x="106" y="209.3" width="29" height="7.0" rx="3.5" fill="#bf8d66" opacity="0.38"/><rect x="111" y="139.7" width="80" height="8.1" rx="4.1" fill="#d7ab86" opacity="0.38"/><rect x="86" y="46.5" width="65" height="7.8" rx="3.9" fill="#c29068" opacity="0.34"/><rect x="165" y="22.1" width="71" height="7.5" rx="3.7" fill="#d3a680" opacity="0.27"/><rect x="123" y="140.7" width="49" height="4.7" rx="2.4" fill="#d3a680" opacity="0.29"/><rect x="150" y="24.1" width="37" height="6.7" rx="3.3" fill="#bf8d66" opacity="0.34"/><rect x="175" y="100.5" width="62" height="3.5" rx="1.8" fill="#d3a680" opacity="0.39"/><rect x="23" y="43.5" width="35" height="7.4" rx="3.7" fill="#d3a680" opacity="0.44"/><rect x="78" y="25.3" width="32" height="8.2" rx="4.1" fill="#c29068" opacity="0.40"/><rect x="77" y="74.3" width="48" height="5.6" rx="2.8" fill="#d3a680" opacity="0.30"/><rect x="-3" y="45.0" width="50" height="8.3" rx="4.2" fill="#d7ab86" opacity="0.26"/><rect x="105" y="90.6" width="90" height="5.1" rx="2.5" fill="#d7ab86" opacity="0.29"/><rect x="77" y="186.3" width="29" height="3.3" rx="1.6" fill="#c29068" opacity="0.41"/><rect x="-8" y="161.5" width="27" height="8.4" rx="4.2" fill="#bf8d66" opacity="0.42"/><rect x="111" y="210.9" width="44" height="7.0" rx="3.5" fill="#d3a680" opacity="0.26"/><rect x="84" y="213.1" width="83" height="6.1" rx="3.1" fill="#d7ab86" opacity="0.40"/><rect x="87" y="130.6" width="30" height="6.2" rx="3.1" fill="#d7ab86" opacity="0.39"/><rect x="162" y="169.8" width="77" height="6.2" rx="3.1" fill="#bf8d66" opacity="0.40"/><rect x="189" y="96.6" width="44" height="4.8" rx="2.4" fill="#d7ab86" opacity="0.27"/><rect x="30" y="66.1" width="78" height="8.4" rx="4.2" fill="#c29068" opacity="0.26"/><rect x="76" y="209.5" width="32" height="8.3" rx="4.2" fill="#c29068" opacity="0.32"/><rect x="-20" y="153.4" width="76" height="4.6" rx="2.3" fill="#bf8d66" opacity="0.47"/><rect x="98" y="47.7" width="77" height="3.9" rx="2.0" fill="#d7ab86" opacity="0.35"/><rect x="148" y="213.1" width="75" height="7.5" rx="3.7" fill="#d3a680" opacity="0.33"/><rect x="51" y="165.1" width="36" height="5.5" rx="2.8" fill="#bf8d66" opacity="0.41"/><rect x="86" y="59.8" width="77" height="6.1" rx="3.1" fill="#d3a680" opacity="0.39"/><rect x="16" y="24.5" width="80" height="8.1" rx="4.0" fill="#c29068" opacity="0.34"/><rect x="47" y="91.2" width="25" height="3.4" rx="1.7" fill="#d3a680" opacity="0.33"/><rect x="30" y="42.7" width="64" height="5.3" rx="2.6" fill="#bf8d66" opacity="0.31"/><rect x="192" y="213.0" width="37" height="5.3" rx="2.7" fill="#bf8d66" opacity="0.26"/><rect x="200" y="176.3" width="38" height="3.9" rx="1.9" fill="#c29068" opacity="0.27"/><rect x="180" y="194.5" width="42" height="8.6" rx="4.3" fill="#d7ab86" opacity="0.42"/><rect x="27" y="53.5" width="46" height="8.7" rx="4.4" fill="#d3a680" opacity="0.38"/></g></svg></div><div class="logo"><svg width="44" height="43" viewBox="0 0 44 43" font-family="Liberation Sans, sans-serif"><rect x="1.4" y="15.8" width="3.1" height="11.4" fill="#a86cc6"/><path d="M5.2 15.2H12.2V26.4H4.6Z" fill="#3a0716"/><path d="M9.4 16.8L6.6 26.4H8.8L9.3 24.4H11.2V22.6H9.8L10.6 19.6V16.8Z" fill="#fff"/><text x="13.4" y="25.8" font-size="12.4" font-weight="bold" fill="#3a0716" letter-spacing="-.25">rtens</text></svg></div><div class="brand">ARTENS</div><div class="price"></div><div class="name"></div></div>
</div>
<div id="track"></div>
<div id="thumb"></div>
<svg class="abs" style="left:561px;top:54px" width="11" height="760" viewBox="561 54 11 760"><path d="M563.2 62L566.5 58.8L569.8 62Z" fill="#3d9a84"/><path d="M563.6 808.9H569.6L566.6 812.1Z" fill="#3d9a84"/></svg>

<div id="frame"></div>
</div>
</body>
</html>
